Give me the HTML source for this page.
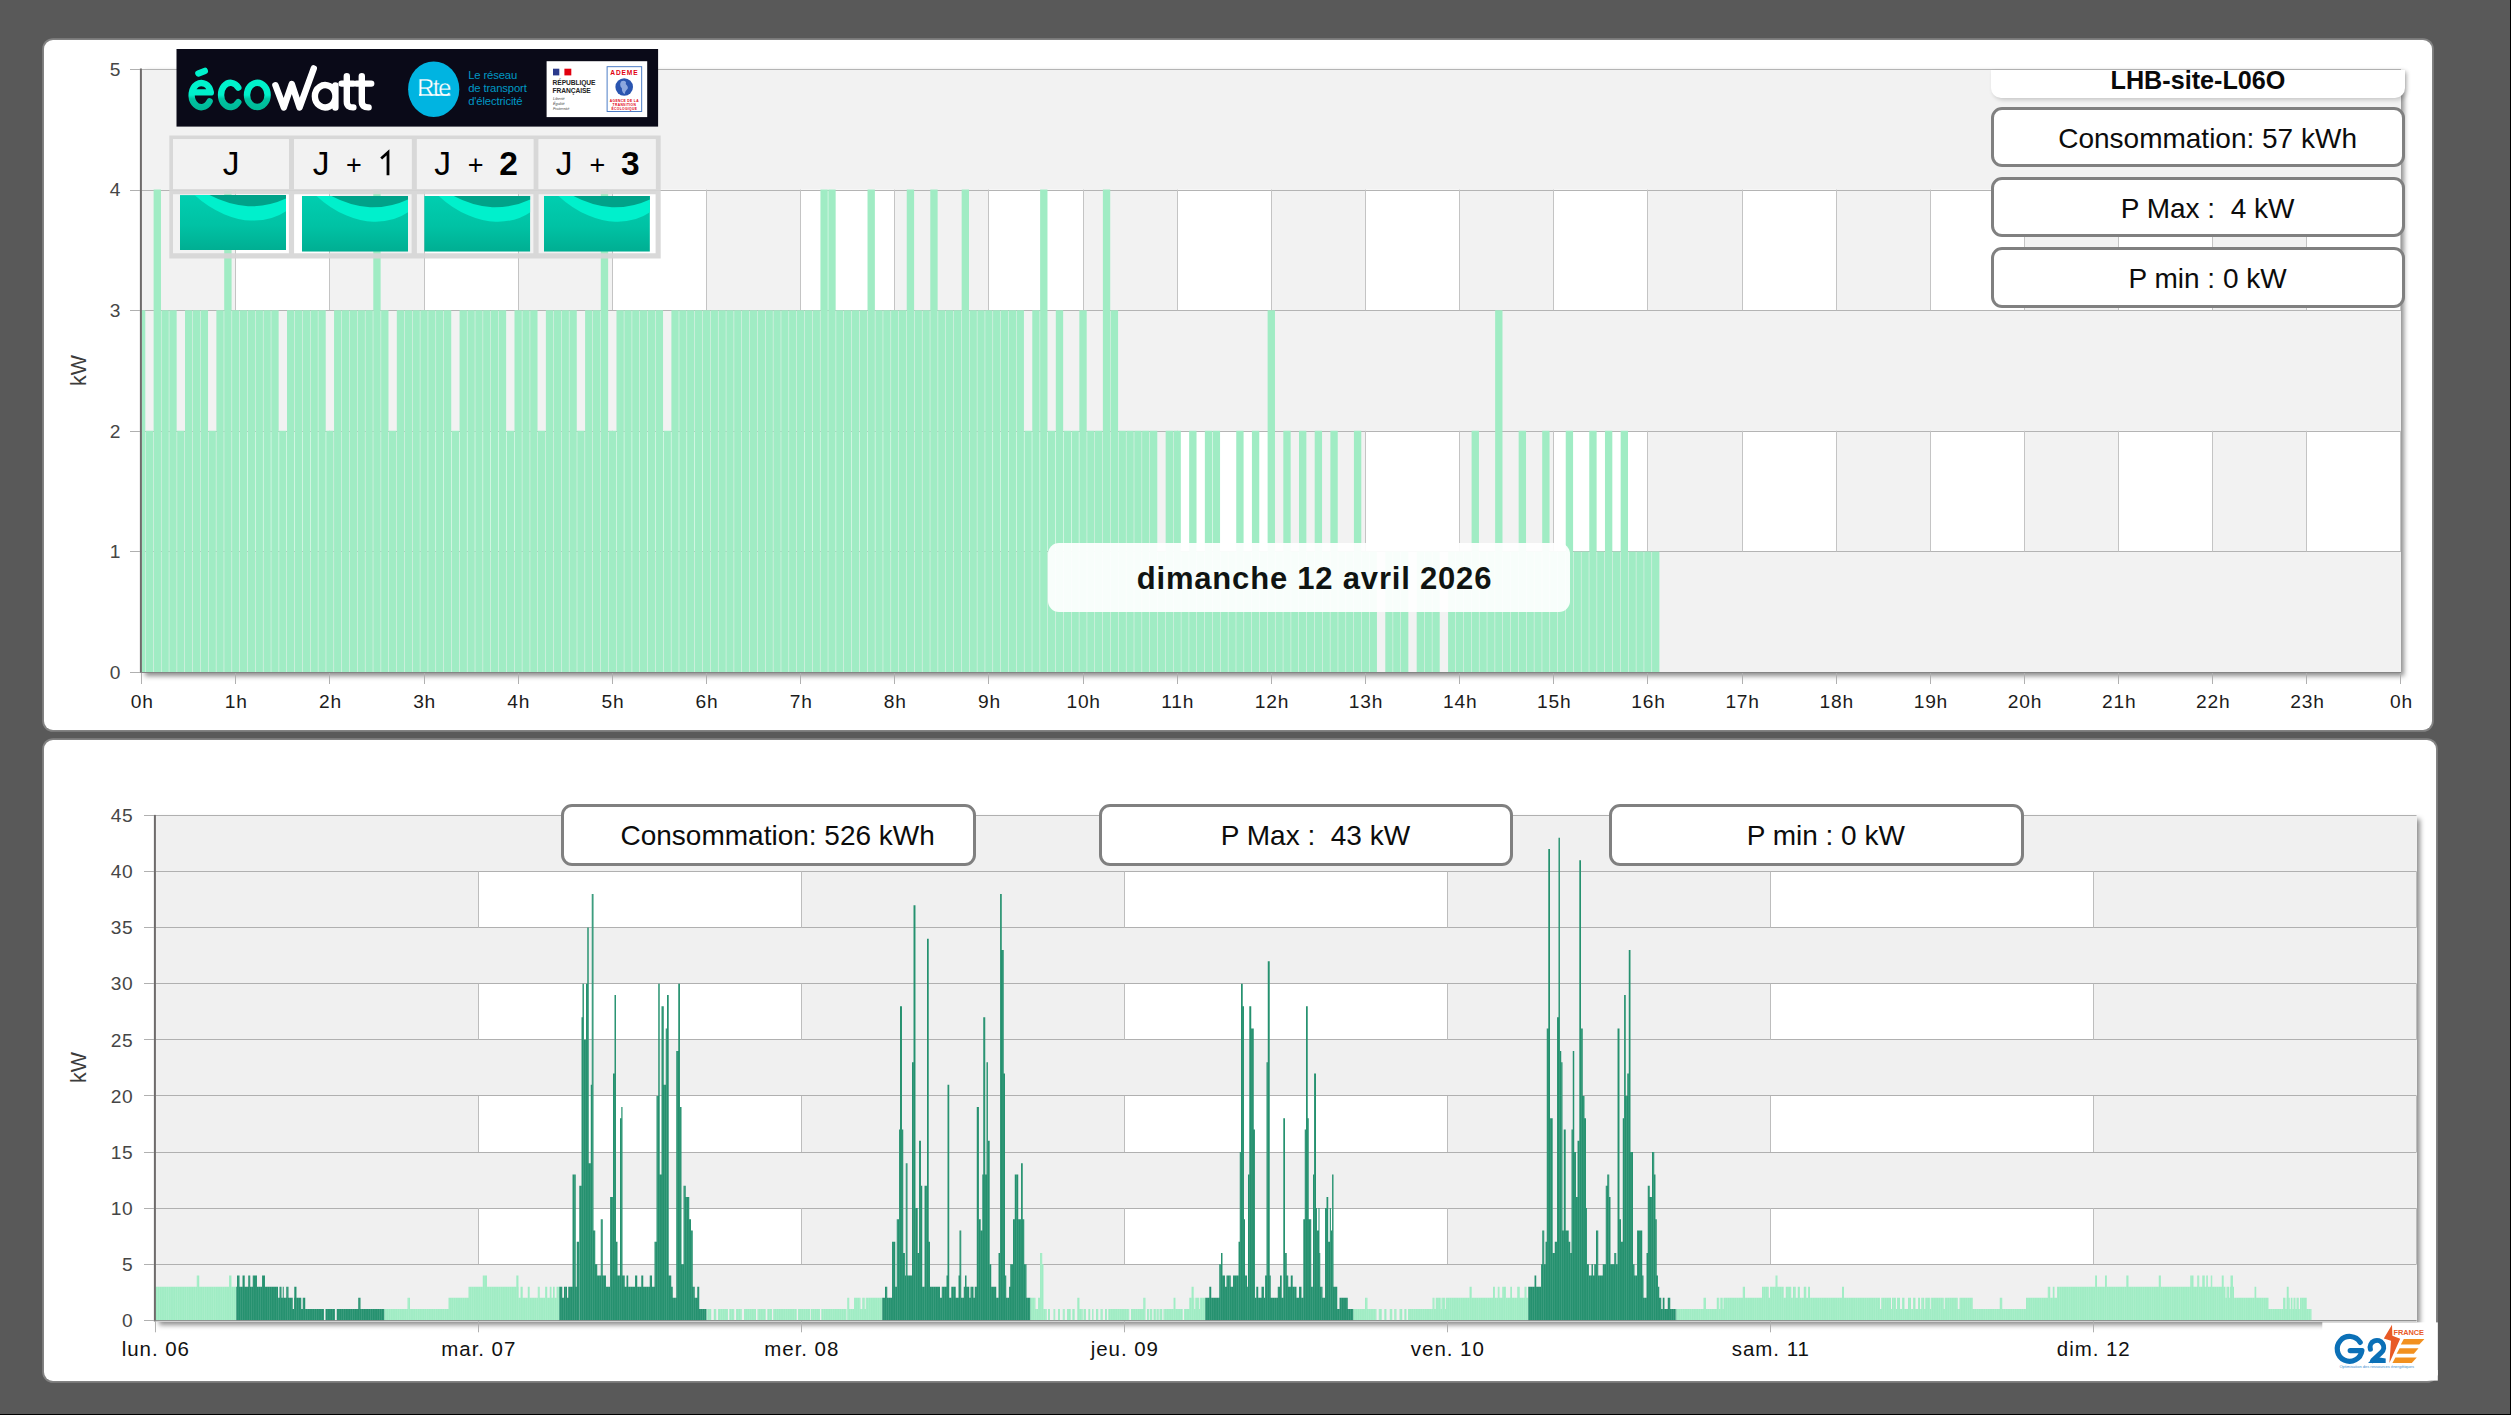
<!DOCTYPE html>
<html><head><meta charset="utf-8"><title>LHB-site-L06O</title>
<style>
html,body{margin:0;padding:0;}
body{width:2511px;height:1415px;overflow:hidden;background:#000;position:relative;font-family:'Liberation Sans', sans-serif;}
#bg{position:absolute;left:0;top:0;width:2510px;height:1414px;background:#595959;}
.panel{position:absolute;background:#fff;border-radius:9px;box-shadow:0 0 0 1.8px rgba(255,255,255,.25);}
.plot{position:absolute;box-shadow:3px 3px 5px rgba(0,0,0,.45);background:#f2f2f2;}
#ov{position:absolute;left:0;top:0;}
.sb{position:absolute;box-sizing:border-box;border:3px solid #808080;border-radius:11px;background:#fff;
 text-align:center;color:#0c0c0c;white-space:pre;padding-left:19px;}
#title{position:absolute;left:1991px;top:69.5px;width:414px;height:28.5px;background:#fff;border-radius:0 0 10px 10px;
 text-align:center;font-weight:bold;font-size:25.2px;line-height:20px;color:#0a0a0a;box-shadow:2px 2px 4px rgba(0,0,0,.18);}
#date{position:absolute;left:1048px;top:542.5px;width:522px;height:69.5px;border-radius:11px;background:rgba(255,255,255,.93);
 text-align:center;font-weight:bold;font-size:31px;letter-spacing:.8px;line-height:71px;padding-left:11px;box-sizing:border-box;color:#101412;}
</style></head><body>
<div id="bg"></div>
<div class="panel" style="left:44px;top:40px;width:2388px;height:690px"></div>
<div class="panel" style="left:44px;top:740.3px;width:2392px;height:640.4px"></div>
<div class="plot" style="left:142px;top:69px;width:2259px;height:604px"></div>
<div class="plot" style="left:156px;top:815.5px;width:2261px;height:506px"></div>
<svg id="ov" width="2511" height="1415" viewBox="0 0 2511 1415">
<rect x="141.6" y="69" width="2259.4" height="603" fill="#f2f2f2"/>
<rect x="235.74" y="430.8" width="94.14" height="120.6" fill="#fff"/>
<rect x="424.02" y="430.8" width="94.14" height="120.6" fill="#fff"/>
<rect x="612.31" y="430.8" width="94.14" height="120.6" fill="#fff"/>
<rect x="800.59" y="430.8" width="94.14" height="120.6" fill="#fff"/>
<rect x="988.88" y="430.8" width="94.14" height="120.6" fill="#fff"/>
<rect x="1177.16" y="430.8" width="94.14" height="120.6" fill="#fff"/>
<rect x="1365.44" y="430.8" width="94.14" height="120.6" fill="#fff"/>
<rect x="1553.72" y="430.8" width="94.14" height="120.6" fill="#fff"/>
<rect x="1742.01" y="430.8" width="94.14" height="120.6" fill="#fff"/>
<rect x="1930.29" y="430.8" width="94.14" height="120.6" fill="#fff"/>
<rect x="2118.57" y="430.8" width="94.14" height="120.6" fill="#fff"/>
<rect x="2306.86" y="430.8" width="94.14" height="120.6" fill="#fff"/>
<rect x="235.74" y="189.6" width="94.14" height="120.6" fill="#fff"/>
<rect x="424.02" y="189.6" width="94.14" height="120.6" fill="#fff"/>
<rect x="612.31" y="189.6" width="94.14" height="120.6" fill="#fff"/>
<rect x="800.59" y="189.6" width="94.14" height="120.6" fill="#fff"/>
<rect x="988.88" y="189.6" width="94.14" height="120.6" fill="#fff"/>
<rect x="1177.16" y="189.6" width="94.14" height="120.6" fill="#fff"/>
<rect x="1365.44" y="189.6" width="94.14" height="120.6" fill="#fff"/>
<rect x="1553.72" y="189.6" width="94.14" height="120.6" fill="#fff"/>
<rect x="1742.01" y="189.6" width="94.14" height="120.6" fill="#fff"/>
<rect x="1930.29" y="189.6" width="94.14" height="120.6" fill="#fff"/>
<rect x="2118.57" y="189.6" width="94.14" height="120.6" fill="#fff"/>
<rect x="2306.86" y="189.6" width="94.14" height="120.6" fill="#fff"/>
<path d="M141.6 672.5H2401M141.6 551.5H2401M141.6 431.5H2401M141.6 310.5H2401M141.6 190.5H2401M141.6 69.5H2401" stroke="#b4b4b4" stroke-width="1" fill="none"/>
<path d="M235.5 430.8V551.4M329.5 430.8V551.4M424.5 430.8V551.4M518.5 430.8V551.4M612.5 430.8V551.4M706.5 430.8V551.4M800.5 430.8V551.4M894.5 430.8V551.4M988.5 430.8V551.4M1083.5 430.8V551.4M1177.5 430.8V551.4M1271.5 430.8V551.4M1365.5 430.8V551.4M1459.5 430.8V551.4M1553.5 430.8V551.4M1647.5 430.8V551.4M1742.5 430.8V551.4M1836.5 430.8V551.4M1930.5 430.8V551.4M2024.5 430.8V551.4M2118.5 430.8V551.4M2212.5 430.8V551.4M2306.5 430.8V551.4M2400.5 430.8V551.4M235.5 189.6V310.2M329.5 189.6V310.2M424.5 189.6V310.2M518.5 189.6V310.2M612.5 189.6V310.2M706.5 189.6V310.2M800.5 189.6V310.2M894.5 189.6V310.2M988.5 189.6V310.2M1083.5 189.6V310.2M1177.5 189.6V310.2M1271.5 189.6V310.2M1365.5 189.6V310.2M1459.5 189.6V310.2M1553.5 189.6V310.2M1647.5 189.6V310.2M1742.5 189.6V310.2M1836.5 189.6V310.2M1930.5 189.6V310.2M2024.5 189.6V310.2M2118.5 189.6V310.2M2212.5 189.6V310.2M2306.5 189.6V310.2M2400.5 189.6V310.2" stroke="#c4c4c4" stroke-width="1" fill="none"/>
<path d="M142 672V310.2H145.28V672ZM145.77 672V430.8H153.12V672ZM153.62 672V189.6H160.97V672ZM161.46 672V310.2H168.81V672ZM169.31 672V310.2H176.66V672ZM177.15 672V430.8H184.5V672ZM185 672V310.2H192.35V672ZM192.84 672V310.2H200.19V672ZM200.69 672V310.2H208.04V672ZM208.53 672V430.8H215.88V672ZM216.38 672V310.2H223.73V672ZM224.22 672V189.6H231.57V672ZM232.07 672V310.2H239.42V672ZM239.91 672V310.2H247.26V672ZM247.76 672V310.2H255.11V672ZM255.6 672V310.2H262.95V672ZM263.45 672V310.2H270.8V672ZM271.29 672V310.2H278.64V672ZM279.14 672V430.8H286.49V672ZM286.98 672V310.2H294.33V672ZM294.83 672V310.2H302.18V672ZM302.67 672V310.2H310.02V672ZM310.52 672V310.2H317.87V672ZM318.36 672V310.2H325.71V672ZM326.21 672V430.8H333.56V672ZM334.05 672V310.2H341.4V672ZM341.9 672V310.2H349.25V672ZM349.74 672V310.2H357.09V672ZM357.59 672V310.2H364.94V672ZM365.43 672V310.2H372.78V672ZM373.28 672V189.6H380.63V672ZM381.12 672V310.2H388.47V672ZM388.97 672V430.8H396.32V672ZM396.81 672V310.2H404.16V672ZM404.66 672V310.2H412.01V672ZM412.5 672V310.2H419.85V672ZM420.35 672V310.2H427.7V672ZM428.2 672V310.2H435.55V672ZM436.04 672V310.2H443.39V672ZM443.89 672V310.2H451.24V672ZM451.73 672V430.8H459.08V672ZM459.58 672V310.2H466.93V672ZM467.42 672V310.2H474.77V672ZM475.27 672V310.2H482.62V672ZM483.11 672V310.2H490.46V672ZM490.96 672V310.2H498.31V672ZM498.8 672V310.2H506.15V672ZM506.65 672V430.8H514V672ZM514.49 672V310.2H521.84V672ZM522.34 672V310.2H529.69V672ZM530.18 672V310.2H537.53V672ZM538.03 672V430.8H545.38V672ZM545.87 672V310.2H553.22V672ZM553.72 672V310.2H561.07V672ZM561.56 672V310.2H568.91V672ZM569.41 672V310.2H576.76V672ZM577.25 672V430.8H584.6V672ZM585.1 672V310.2H592.45V672ZM592.94 672V310.2H600.29V672ZM600.79 672V189.6H608.14V672ZM608.63 672V430.8H615.98V672ZM616.48 672V310.2H623.83V672ZM624.32 672V310.2H631.67V672ZM632.17 672V310.2H639.52V672ZM640.01 672V310.2H647.36V672ZM647.86 672V310.2H655.21V672ZM655.7 672V310.2H663.05V672ZM663.55 672V430.8H670.9V672ZM671.39 672V310.2H678.74V672ZM679.24 672V310.2H686.59V672ZM687.08 672V310.2H694.43V672ZM694.93 672V310.2H702.28V672ZM702.78 672V310.2H710.12V672ZM710.62 672V310.2H717.97V672ZM718.47 672V310.2H725.82V672ZM726.31 672V310.2H733.66V672ZM734.16 672V310.2H741.51V672ZM742 672V310.2H749.35V672ZM749.85 672V310.2H757.2V672ZM757.69 672V310.2H765.04V672ZM765.54 672V310.2H772.89V672ZM773.38 672V310.2H780.73V672ZM781.23 672V310.2H788.58V672ZM789.07 672V310.2H796.42V672ZM796.92 672V310.2H804.27V672ZM804.76 672V310.2H812.11V672ZM812.61 672V310.2H819.96V672ZM820.45 672V189.6H827.8V672ZM828.3 672V189.6H835.65V672ZM836.14 672V310.2H843.49V672ZM843.99 672V310.2H851.34V672ZM851.83 672V310.2H859.18V672ZM859.68 672V310.2H867.03V672ZM867.52 672V189.6H874.87V672ZM875.37 672V310.2H882.72V672ZM883.21 672V310.2H890.56V672ZM891.06 672V310.2H898.41V672ZM898.9 672V310.2H906.25V672ZM906.75 672V189.6H914.1V672ZM914.59 672V310.2H921.94V672ZM922.44 672V310.2H929.79V672ZM930.28 672V189.6H937.63V672ZM938.13 672V310.2H945.48V672ZM945.97 672V310.2H953.32V672ZM953.82 672V310.2H961.17V672ZM961.66 672V189.6H969.01V672ZM969.51 672V310.2H976.86V672ZM977.35 672V310.2H984.7V672ZM985.2 672V310.2H992.55V672ZM993.05 672V310.2H1000.4V672ZM1000.89 672V310.2H1008.24V672ZM1008.74 672V310.2H1016.09V672ZM1016.58 672V310.2H1023.93V672ZM1024.43 672V430.8H1031.78V672ZM1032.27 672V310.2H1039.62V672ZM1040.12 672V189.6H1047.47V672ZM1047.96 672V430.8H1055.31V672ZM1055.81 672V310.2H1063.16V672ZM1063.65 672V430.8H1071V672ZM1071.5 672V430.8H1078.85V672ZM1079.34 672V310.2H1086.69V672ZM1087.19 672V430.8H1094.54V672ZM1095.03 672V430.8H1102.38V672ZM1102.88 672V189.6H1110.23V672ZM1110.72 672V310.2H1118.07V672ZM1118.57 672V430.8H1125.92V672ZM1126.41 672V430.8H1133.76V672ZM1134.26 672V430.8H1141.61V672ZM1142.1 672V430.8H1149.45V672ZM1149.95 672V430.8H1157.3V672ZM1157.79 672V551.4H1165.14V672ZM1165.64 672V430.8H1172.99V672ZM1173.48 672V430.8H1180.83V672ZM1181.33 672V551.4H1188.68V672ZM1189.17 672V430.8H1196.52V672ZM1197.02 672V551.4H1204.37V672ZM1204.86 672V430.8H1212.21V672ZM1212.71 672V430.8H1220.06V672ZM1220.55 672V551.4H1227.9V672ZM1228.4 672V551.4H1235.75V672ZM1236.24 672V430.8H1243.59V672ZM1244.09 672V551.4H1251.44V672ZM1251.93 672V430.8H1259.28V672ZM1259.78 672V551.4H1267.13V672ZM1267.62 672V310.2H1274.97V672ZM1275.47 672V551.4H1282.82V672ZM1283.32 672V430.8H1290.67V672ZM1291.16 672V551.4H1298.51V672ZM1299.01 672V430.8H1306.36V672ZM1306.85 672V551.4H1314.2V672ZM1314.7 672V430.8H1322.05V672ZM1322.54 672V551.4H1329.89V672ZM1330.39 672V430.8H1337.74V672ZM1338.23 672V551.4H1345.58V672ZM1346.08 672V551.4H1353.43V672ZM1353.92 672V430.8H1361.27V672ZM1361.77 672V551.4H1369.12V672ZM1369.61 672V551.4H1376.96V672ZM1385.3 672V551.4H1392.65V672ZM1393.15 672V551.4H1400.5V672ZM1400.99 672V551.4H1408.34V672ZM1416.68 672V551.4H1424.03V672ZM1424.53 672V551.4H1431.88V672ZM1432.37 672V551.4H1439.72V672ZM1448.06 672V551.4H1455.41V672ZM1455.91 672V551.4H1463.26V672ZM1463.75 672V551.4H1471.1V672ZM1471.6 672V430.8H1478.95V672ZM1479.44 672V551.4H1486.79V672ZM1487.29 672V551.4H1494.64V672ZM1495.13 672V310.2H1502.48V672ZM1502.98 672V551.4H1510.33V672ZM1510.82 672V551.4H1518.17V672ZM1518.67 672V430.8H1526.02V672ZM1526.51 672V551.4H1533.86V672ZM1534.36 672V551.4H1541.71V672ZM1542.2 672V430.8H1549.55V672ZM1550.05 672V551.4H1557.4V672ZM1557.9 672V551.4H1565.25V672ZM1565.74 672V430.8H1573.09V672ZM1573.59 672V551.4H1580.94V672ZM1581.43 672V551.4H1588.78V672ZM1589.28 672V430.8H1596.63V672ZM1597.12 672V551.4H1604.47V672ZM1604.97 672V430.8H1612.32V672ZM1612.81 672V551.4H1620.16V672ZM1620.66 672V430.8H1628.01V672ZM1628.5 672V551.4H1635.85V672ZM1636.35 672V551.4H1643.7V672ZM1644.19 672V551.4H1651.54V672ZM1652.04 672V551.4H1659.39V672Z" fill="#a0ecc4"/>
<rect x="139.9" y="68.5" width="2" height="604.5" fill="#6e6b6b"/>
<rect x="139.9" y="672" width="2261.1" height="1" fill="#858585"/>
<path d="M130 672.5H140M130 551.5H140M130 431.5H140M130 310.5H140M130 190.5H140M130 69.5H140M141.5 673V684M235.5 673V684M329.5 673V684M424.5 673V684M518.5 673V684M612.5 673V684M706.5 673V684M800.5 673V684M894.5 673V684M988.5 673V684M1083.5 673V684M1177.5 673V684M1271.5 673V684M1365.5 673V684M1459.5 673V684M1553.5 673V684M1647.5 673V684M1742.5 673V684M1836.5 673V684M1930.5 673V684M2024.5 673V684M2118.5 673V684M2212.5 673V684M2306.5 673V684M2400.5 673V684" stroke="#b0b0b0" stroke-width="1" fill="none"/>
<text x="121.2" y="678.8" text-anchor="end" style="font-family:'Liberation Sans', sans-serif;font-size:19.2px;letter-spacing:0.8px" fill="#464646">0</text>
<text x="121.2" y="558.2" text-anchor="end" style="font-family:'Liberation Sans', sans-serif;font-size:19.2px;letter-spacing:0.8px" fill="#464646">1</text>
<text x="121.2" y="437.6" text-anchor="end" style="font-family:'Liberation Sans', sans-serif;font-size:19.2px;letter-spacing:0.8px" fill="#464646">2</text>
<text x="121.2" y="317" text-anchor="end" style="font-family:'Liberation Sans', sans-serif;font-size:19.2px;letter-spacing:0.8px" fill="#464646">3</text>
<text x="121.2" y="196.4" text-anchor="end" style="font-family:'Liberation Sans', sans-serif;font-size:19.2px;letter-spacing:0.8px" fill="#464646">4</text>
<text x="121.2" y="75.8" text-anchor="end" style="font-family:'Liberation Sans', sans-serif;font-size:19.2px;letter-spacing:0.8px" fill="#464646">5</text>
<text x="142.2" y="707.6" text-anchor="middle" style="font-family:'Liberation Sans', sans-serif;font-size:19.2px;letter-spacing:0.8px" fill="#1c1c1c">0h</text>
<text x="236.34" y="707.6" text-anchor="middle" style="font-family:'Liberation Sans', sans-serif;font-size:19.2px;letter-spacing:0.8px" fill="#1c1c1c">1h</text>
<text x="330.48" y="707.6" text-anchor="middle" style="font-family:'Liberation Sans', sans-serif;font-size:19.2px;letter-spacing:0.8px" fill="#1c1c1c">2h</text>
<text x="424.62" y="707.6" text-anchor="middle" style="font-family:'Liberation Sans', sans-serif;font-size:19.2px;letter-spacing:0.8px" fill="#1c1c1c">3h</text>
<text x="518.77" y="707.6" text-anchor="middle" style="font-family:'Liberation Sans', sans-serif;font-size:19.2px;letter-spacing:0.8px" fill="#1c1c1c">4h</text>
<text x="612.91" y="707.6" text-anchor="middle" style="font-family:'Liberation Sans', sans-serif;font-size:19.2px;letter-spacing:0.8px" fill="#1c1c1c">5h</text>
<text x="707.05" y="707.6" text-anchor="middle" style="font-family:'Liberation Sans', sans-serif;font-size:19.2px;letter-spacing:0.8px" fill="#1c1c1c">6h</text>
<text x="801.19" y="707.6" text-anchor="middle" style="font-family:'Liberation Sans', sans-serif;font-size:19.2px;letter-spacing:0.8px" fill="#1c1c1c">7h</text>
<text x="895.33" y="707.6" text-anchor="middle" style="font-family:'Liberation Sans', sans-serif;font-size:19.2px;letter-spacing:0.8px" fill="#1c1c1c">8h</text>
<text x="989.48" y="707.6" text-anchor="middle" style="font-family:'Liberation Sans', sans-serif;font-size:19.2px;letter-spacing:0.8px" fill="#1c1c1c">9h</text>
<text x="1083.62" y="707.6" text-anchor="middle" style="font-family:'Liberation Sans', sans-serif;font-size:19.2px;letter-spacing:0.8px" fill="#1c1c1c">10h</text>
<text x="1177.76" y="707.6" text-anchor="middle" style="font-family:'Liberation Sans', sans-serif;font-size:19.2px;letter-spacing:0.8px" fill="#1c1c1c">11h</text>
<text x="1271.9" y="707.6" text-anchor="middle" style="font-family:'Liberation Sans', sans-serif;font-size:19.2px;letter-spacing:0.8px" fill="#1c1c1c">12h</text>
<text x="1366.04" y="707.6" text-anchor="middle" style="font-family:'Liberation Sans', sans-serif;font-size:19.2px;letter-spacing:0.8px" fill="#1c1c1c">13h</text>
<text x="1460.18" y="707.6" text-anchor="middle" style="font-family:'Liberation Sans', sans-serif;font-size:19.2px;letter-spacing:0.8px" fill="#1c1c1c">14h</text>
<text x="1554.32" y="707.6" text-anchor="middle" style="font-family:'Liberation Sans', sans-serif;font-size:19.2px;letter-spacing:0.8px" fill="#1c1c1c">15h</text>
<text x="1648.47" y="707.6" text-anchor="middle" style="font-family:'Liberation Sans', sans-serif;font-size:19.2px;letter-spacing:0.8px" fill="#1c1c1c">16h</text>
<text x="1742.61" y="707.6" text-anchor="middle" style="font-family:'Liberation Sans', sans-serif;font-size:19.2px;letter-spacing:0.8px" fill="#1c1c1c">17h</text>
<text x="1836.75" y="707.6" text-anchor="middle" style="font-family:'Liberation Sans', sans-serif;font-size:19.2px;letter-spacing:0.8px" fill="#1c1c1c">18h</text>
<text x="1930.89" y="707.6" text-anchor="middle" style="font-family:'Liberation Sans', sans-serif;font-size:19.2px;letter-spacing:0.8px" fill="#1c1c1c">19h</text>
<text x="2025.03" y="707.6" text-anchor="middle" style="font-family:'Liberation Sans', sans-serif;font-size:19.2px;letter-spacing:0.8px" fill="#1c1c1c">20h</text>
<text x="2119.17" y="707.6" text-anchor="middle" style="font-family:'Liberation Sans', sans-serif;font-size:19.2px;letter-spacing:0.8px" fill="#1c1c1c">21h</text>
<text x="2213.32" y="707.6" text-anchor="middle" style="font-family:'Liberation Sans', sans-serif;font-size:19.2px;letter-spacing:0.8px" fill="#1c1c1c">22h</text>
<text x="2307.46" y="707.6" text-anchor="middle" style="font-family:'Liberation Sans', sans-serif;font-size:19.2px;letter-spacing:0.8px" fill="#1c1c1c">23h</text>
<text x="2401.6" y="707.6" text-anchor="middle" style="font-family:'Liberation Sans', sans-serif;font-size:19.2px;letter-spacing:0.8px" fill="#1c1c1c">0h</text>
<text transform="translate(86.2 370.6) rotate(-90)" text-anchor="middle" style="font-family:'Liberation Sans', sans-serif;font-size:21.5px" fill="#3c3c3c">kW</text>
<rect x="155.5" y="815.4" width="2261" height="504.9" fill="#f0f0f0"/>
<rect x="478.5" y="1208.1" width="323" height="56.1" fill="#fff"/>
<rect x="1124.5" y="1208.1" width="323" height="56.1" fill="#fff"/>
<rect x="1770.5" y="1208.1" width="323" height="56.1" fill="#fff"/>
<rect x="478.5" y="1095.9" width="323" height="56.1" fill="#fff"/>
<rect x="1124.5" y="1095.9" width="323" height="56.1" fill="#fff"/>
<rect x="1770.5" y="1095.9" width="323" height="56.1" fill="#fff"/>
<rect x="478.5" y="983.7" width="323" height="56.1" fill="#fff"/>
<rect x="1124.5" y="983.7" width="323" height="56.1" fill="#fff"/>
<rect x="1770.5" y="983.7" width="323" height="56.1" fill="#fff"/>
<rect x="478.5" y="871.5" width="323" height="56.1" fill="#fff"/>
<rect x="1124.5" y="871.5" width="323" height="56.1" fill="#fff"/>
<rect x="1770.5" y="871.5" width="323" height="56.1" fill="#fff"/>
<path d="M155.5 1320.5H2416.5M155.5 1264.5H2416.5M155.5 1208.5H2416.5M155.5 1152.5H2416.5M155.5 1095.5H2416.5M155.5 1039.5H2416.5M155.5 983.5H2416.5M155.5 927.5H2416.5M155.5 871.5H2416.5M155.5 815.5H2416.5" stroke="#b0b0b0" stroke-width="1" fill="none"/>
<path d="M478.5 1208.1V1264.2M801.5 1208.1V1264.2M1124.5 1208.1V1264.2M1447.5 1208.1V1264.2M1770.5 1208.1V1264.2M2093.5 1208.1V1264.2M2416.5 1208.1V1264.2M478.5 1095.9V1152M801.5 1095.9V1152M1124.5 1095.9V1152M1447.5 1095.9V1152M1770.5 1095.9V1152M2093.5 1095.9V1152M2416.5 1095.9V1152M478.5 983.7V1039.8M801.5 983.7V1039.8M1124.5 983.7V1039.8M1447.5 983.7V1039.8M1770.5 983.7V1039.8M2093.5 983.7V1039.8M2416.5 983.7V1039.8M478.5 871.5V927.6M801.5 871.5V927.6M1124.5 871.5V927.6M1447.5 871.5V927.6M1770.5 871.5V927.6M2093.5 871.5V927.6M2416.5 871.5V927.6" stroke="#bdbdbd" stroke-width="1" fill="none"/>
<path d="M155.5 1320.3V1286.64H196.75V1320.3ZM196.75 1320.3V1275.42H199.25V1320.3ZM199.25 1320.3V1286.64H229V1320.3ZM229 1320.3V1275.42H231.5V1320.3ZM231.5 1320.3V1286.64H236.25V1320.3ZM384.25 1320.3V1309.08H407.5V1320.3ZM407.5 1320.3V1297.86H410V1320.3ZM410 1320.3V1309.08H448.5V1320.3ZM448.5 1320.3V1297.86H468.5V1320.3ZM468.5 1320.3V1286.64H482.75V1320.3ZM482.75 1320.3V1275.42H487V1320.3ZM487 1320.3V1286.64H516.25V1320.3ZM516.25 1320.3V1275.42H518.5V1320.3ZM518.5 1320.3V1286.64H518.75V1320.3ZM518.75 1320.3V1297.86H520.5V1320.3ZM520.5 1320.3V1286.64H522.75V1320.3ZM522.75 1320.3V1297.86H527.75V1320.3ZM527.75 1320.3V1286.64H529.75V1320.3ZM529.75 1320.3V1297.86H537.75V1320.3ZM537.75 1320.3V1286.64H539.75V1320.3ZM539.75 1320.3V1297.86H545V1320.3ZM545 1320.3V1286.64H547.25V1320.3ZM547.25 1320.3V1297.86H549.75V1320.3ZM549.75 1320.3V1286.64H551.5V1320.3ZM551.5 1320.3V1297.86H553V1320.3ZM553 1320.3V1286.64H554.75V1320.3ZM554.75 1320.3V1297.86H556.5V1320.3ZM556.5 1320.3V1286.64H559.25V1320.3ZM707.25 1320.3V1309.08H711.25V1320.3ZM713.75 1320.3V1309.08H716.25V1320.3ZM718 1320.3V1309.08H728V1320.3ZM729.25 1320.3V1309.08H734.25V1320.3ZM736 1320.3V1309.08H741.75V1320.3ZM744 1320.3V1309.08H756V1320.3ZM757.5 1320.3V1309.08H765.75V1320.3ZM767.25 1320.3V1309.08H772V1320.3ZM773.25 1320.3V1309.08H796.75V1320.3ZM798 1320.3V1309.08H810.25V1320.3ZM811 1320.3V1309.08H820V1320.3ZM821.25 1320.3V1309.08H846.5V1320.3ZM847.25 1320.3V1297.86H849.25V1320.3ZM849.25 1320.3V1309.08H854V1320.3ZM854 1320.3V1297.86H860.5V1320.3ZM860.5 1320.3V1309.08H862.25V1320.3ZM862.25 1320.3V1297.86H864.75V1320.3ZM864.75 1320.3V1309.08H865.75V1320.3ZM865.75 1320.3V1297.86H882.25V1320.3ZM1030.25 1320.3V1297.86H1035.5V1320.3ZM1035.5 1320.3V1309.08H1038V1320.3ZM1038 1320.3V1297.86H1040V1320.3ZM1040 1320.3V1252.98H1042.25V1320.3ZM1042.25 1320.3V1264.2H1043.5V1320.3ZM1043.5 1320.3V1309.08H1046.75V1320.3ZM1048 1320.3V1309.08H1050V1320.3ZM1053.5 1320.3V1309.08H1055.25V1320.3ZM1058 1320.3V1309.08H1060V1320.3ZM1062.75 1320.3V1309.08H1064.75V1320.3ZM1067 1320.3V1309.08H1070.75V1320.3ZM1072.25 1320.3V1309.08H1074.75V1320.3ZM1077.25 1320.3V1297.86H1079.5V1320.3ZM1079.5 1320.3V1309.08H1082.75V1320.3ZM1083.5 1320.3V1309.08H1086V1320.3ZM1088.25 1320.3V1309.08H1090.25V1320.3ZM1092 1320.3V1309.08H1093.5V1320.3ZM1096 1320.3V1309.08H1098.25V1320.3ZM1100.5 1320.3V1309.08H1102.75V1320.3ZM1105 1320.3V1309.08H1107V1320.3ZM1108.25 1320.3V1309.08H1129.25V1320.3ZM1131 1320.3V1309.08H1143.25V1320.3ZM1143.25 1320.3V1297.86H1145.5V1320.3ZM1147 1320.3V1309.08H1149.25V1320.3ZM1150 1320.3V1309.08H1152.25V1320.3ZM1153.5 1320.3V1309.08H1156V1320.3ZM1156.5 1320.3V1309.08H1158.75V1320.3ZM1159.5 1320.3V1309.08H1162.25V1320.3ZM1163.5 1320.3V1309.08H1173.5V1320.3ZM1173.5 1320.3V1297.86H1175.5V1320.3ZM1175.5 1320.3V1309.08H1182.75V1320.3ZM1184 1320.3V1309.08H1189.25V1320.3ZM1189.25 1320.3V1297.86H1191.5V1320.3ZM1191.5 1320.3V1286.64H1193.75V1320.3ZM1193.75 1320.3V1297.86H1194.25V1320.3ZM1194.25 1320.3V1309.08H1195.25V1320.3ZM1195.25 1320.3V1297.86H1199V1320.3ZM1199 1320.3V1309.08H1199.75V1320.3ZM1199.75 1320.3V1297.86H1205.25V1320.3ZM1353.25 1320.3V1309.08H1365V1320.3ZM1365 1320.3V1297.86H1367.5V1320.3ZM1367.5 1320.3V1309.08H1376.5V1320.3ZM1378.75 1320.3V1309.08H1381.75V1320.3ZM1384.25 1320.3V1309.08H1386.5V1320.3ZM1389.75 1320.3V1309.08H1392.25V1320.3ZM1394.25 1320.3V1309.08H1396.5V1320.3ZM1399.5 1320.3V1309.08H1402.25V1320.3ZM1404.25 1320.3V1309.08H1406.5V1320.3ZM1408 1320.3V1309.08H1432.5V1320.3ZM1432.5 1320.3V1297.86H1434.5V1320.3ZM1434.5 1320.3V1309.08H1435.75V1320.3ZM1435.75 1320.3V1297.86H1440.75V1320.3ZM1440.75 1320.3V1309.08H1441.5V1320.3ZM1441.5 1320.3V1297.86H1445V1320.3ZM1445 1320.3V1309.08H1445.75V1320.3ZM1445.75 1320.3V1297.86H1469.5V1320.3ZM1469.5 1320.3V1286.64H1471.75V1320.3ZM1471.75 1320.3V1297.86H1493V1320.3ZM1493 1320.3V1286.64H1495V1320.3ZM1495 1320.3V1297.86H1497.75V1320.3ZM1497.75 1320.3V1286.64H1499.5V1320.3ZM1499.5 1320.3V1297.86H1502.25V1320.3ZM1502.25 1320.3V1286.64H1506V1320.3ZM1506 1320.3V1297.86H1510.25V1320.3ZM1510.25 1320.3V1286.64H1512V1320.3ZM1512 1320.3V1297.86H1517.25V1320.3ZM1517.25 1320.3V1286.64H1519.75V1320.3ZM1519.75 1320.3V1297.86H1524.5V1320.3ZM1524.5 1320.3V1286.64H1526.5V1320.3ZM1526.5 1320.3V1297.86H1528.25V1320.3ZM1676.25 1320.3V1309.08H1703.5V1320.3ZM1703.5 1320.3V1297.86H1706V1320.3ZM1706 1320.3V1309.08H1716.75V1320.3ZM1716.75 1320.3V1297.86H1719.25V1320.3ZM1719.25 1320.3V1309.08H1720.25V1320.3ZM1720.25 1320.3V1297.86H1722.75V1320.3ZM1722.75 1320.3V1309.08H1723.5V1320.3ZM1723.5 1320.3V1297.86H1742.75V1320.3ZM1742.75 1320.3V1286.64H1745V1320.3ZM1745 1320.3V1297.86H1762V1320.3ZM1762 1320.3V1286.64H1768.75V1320.3ZM1768.75 1320.3V1297.86H1770V1320.3ZM1770 1320.3V1286.64H1775.5V1320.3ZM1775.5 1320.3V1275.42H1777.5V1320.3ZM1777.5 1320.3V1286.64H1783.75V1320.3ZM1783.75 1320.3V1297.86H1785.75V1320.3ZM1785.75 1320.3V1286.64H1791.25V1320.3ZM1791.25 1320.3V1297.86H1793V1320.3ZM1793 1320.3V1286.64H1795.75V1320.3ZM1795.75 1320.3V1297.86H1797.75V1320.3ZM1797.75 1320.3V1286.64H1800V1320.3ZM1800 1320.3V1297.86H1803.75V1320.3ZM1803.75 1320.3V1286.64H1806.25V1320.3ZM1806.25 1320.3V1297.86H1808V1320.3ZM1808 1320.3V1286.64H1810V1320.3ZM1810 1320.3V1297.86H1842V1320.3ZM1842 1320.3V1286.64H1844V1320.3ZM1844 1320.3V1297.86H1880V1320.3ZM1880 1320.3V1309.08H1881.25V1320.3ZM1881.25 1320.3V1297.86H1891V1320.3ZM1891 1320.3V1309.08H1892V1320.3ZM1892 1320.3V1297.86H1896V1320.3ZM1896 1320.3V1309.08H1897V1320.3ZM1897 1320.3V1297.86H1900V1320.3ZM1900 1320.3V1309.08H1902V1320.3ZM1902 1320.3V1297.86H1904.5V1320.3ZM1904.5 1320.3V1309.08H1908V1320.3ZM1908 1320.3V1297.86H1911V1320.3ZM1911 1320.3V1309.08H1913V1320.3ZM1913 1320.3V1297.86H1915.5V1320.3ZM1915.5 1320.3V1309.08H1918V1320.3ZM1918 1320.3V1297.86H1920V1320.3ZM1920 1320.3V1309.08H1921.25V1320.3ZM1921.25 1320.3V1297.86H1924.25V1320.3ZM1924.25 1320.3V1309.08H1925.25V1320.3ZM1925.25 1320.3V1297.86H1930.25V1320.3ZM1930.25 1320.3V1309.08H1931V1320.3ZM1931 1320.3V1297.86H1943.75V1320.3ZM1943.75 1320.3V1309.08H1944.75V1320.3ZM1944.75 1320.3V1297.86H1957.75V1320.3ZM1957.75 1320.3V1309.08H1959.5V1320.3ZM1959.5 1320.3V1297.86H1972.75V1320.3ZM1972.75 1320.3V1309.08H1999.75V1320.3ZM1999.75 1320.3V1297.86H2002.25V1320.3ZM2002.25 1320.3V1309.08H2026V1320.3ZM2026 1320.3V1297.86H2047.75V1320.3ZM2047.75 1320.3V1286.64H2050.25V1320.3ZM2050.25 1320.3V1297.86H2052.75V1320.3ZM2052.75 1320.3V1286.64H2054.5V1320.3ZM2054.5 1320.3V1297.86H2057V1320.3ZM2057 1320.3V1286.64H2095V1320.3ZM2095 1320.3V1275.42H2097V1320.3ZM2097 1320.3V1286.64H2105V1320.3ZM2105 1320.3V1275.42H2107V1320.3ZM2107 1320.3V1286.64H2126.25V1320.3ZM2126.25 1320.3V1275.42H2128.5V1320.3ZM2128.5 1320.3V1286.64H2158.75V1320.3ZM2158.75 1320.3V1275.42H2161V1320.3ZM2161 1320.3V1286.64H2190.25V1320.3ZM2190.25 1320.3V1275.42H2193.5V1320.3ZM2193.5 1320.3V1286.64H2197.25V1320.3ZM2197.25 1320.3V1275.42H2199.25V1320.3ZM2199.25 1320.3V1286.64H2202.25V1320.3ZM2202.25 1320.3V1275.42H2204.75V1320.3ZM2204.75 1320.3V1286.64H2206.25V1320.3ZM2206.25 1320.3V1275.42H2208V1320.3ZM2208 1320.3V1286.64H2210.75V1320.3ZM2210.75 1320.3V1275.42H2212.25V1320.3ZM2212.25 1320.3V1286.64H2221.75V1320.3ZM2221.75 1320.3V1275.42H2223.75V1320.3ZM2223.75 1320.3V1286.64H2225.5V1320.3ZM2225.5 1320.3V1297.86H2226.5V1320.3ZM2226.5 1320.3V1286.64H2229V1320.3ZM2229 1320.3V1297.86H2229.75V1320.3ZM2229.75 1320.3V1286.64H2230.5V1320.3ZM2230.5 1320.3V1275.42H2233V1320.3ZM2233 1320.3V1286.64H2234V1320.3ZM2234 1320.3V1297.86H2254.5V1320.3ZM2254.5 1320.3V1286.64H2256.25V1320.3ZM2256.25 1320.3V1297.86H2268.5V1320.3ZM2268.5 1320.3V1309.08H2283V1320.3ZM2283 1320.3V1297.86H2285.5V1320.3ZM2285.5 1320.3V1309.08H2286.5V1320.3ZM2286.5 1320.3V1297.86H2286.75V1320.3ZM2286.75 1320.3V1286.64H2288.75V1320.3ZM2288.75 1320.3V1297.86H2289.75V1320.3ZM2289.75 1320.3V1309.08H2290.75V1320.3ZM2290.75 1320.3V1297.86H2292.5V1320.3ZM2292.5 1320.3V1309.08H2293.5V1320.3ZM2293.5 1320.3V1297.86H2295.5V1320.3ZM2295.5 1320.3V1309.08H2296.5V1320.3ZM2296.5 1320.3V1297.86H2298.75V1320.3ZM2298.75 1320.3V1309.08H2300V1320.3ZM2300 1320.3V1297.86H2306.75V1320.3ZM2306.75 1320.3V1309.08H2311.5V1320.3Z" fill="#a0ecc4"/>
<path d="M236.25 1320.3V1286.64H237V1320.3ZM237 1320.3V1275.42H239.5V1320.3ZM239.5 1320.3V1286.64H242.5V1320.3ZM242.5 1320.3V1275.42H244.75V1320.3ZM244.75 1320.3V1286.64H248.25V1320.3ZM248.25 1320.3V1275.42H250.25V1320.3ZM250.25 1320.3V1286.64H252.75V1320.3ZM252.75 1320.3V1275.42H257V1320.3ZM257 1320.3V1286.64H262V1320.3ZM262 1320.3V1275.42H265V1320.3ZM265 1320.3V1286.64H278V1320.3ZM278 1320.3V1297.86H279.5V1320.3ZM279.5 1320.3V1286.64H281.5V1320.3ZM281.5 1320.3V1297.86H282.75V1320.3ZM282.75 1320.3V1286.64H283.75V1320.3ZM283.75 1320.3V1297.86H286.25V1320.3ZM286.25 1320.3V1286.64H288.5V1320.3ZM288.5 1320.3V1297.86H292.75V1320.3ZM292.75 1320.3V1309.08H294V1320.3ZM294 1320.3V1297.86H294.25V1320.3ZM294.25 1320.3V1286.64H296.5V1320.3ZM296.5 1320.3V1297.86H301.25V1320.3ZM301.25 1320.3V1309.08H302.75V1320.3ZM302.75 1320.3V1297.86H305.25V1320.3ZM305.25 1320.3V1309.08H324V1320.3ZM325.5 1320.3V1309.08H335V1320.3ZM336.75 1320.3V1309.08H358.25V1320.3ZM358.25 1320.3V1297.86H360.5V1320.3ZM360.5 1320.3V1309.08H384.25V1320.3ZM559.25 1320.3V1286.64H562.25V1320.3ZM562.25 1320.3V1297.86H564V1320.3ZM564 1320.3V1286.64H567V1320.3ZM567 1320.3V1297.86H568.25V1320.3ZM568.25 1320.3V1286.64H572.5V1320.3ZM572.5 1320.3V1174.44H575.75V1320.3ZM575.75 1320.3V1286.64H576.75V1320.3ZM576.75 1320.3V1241.76H579V1320.3ZM579.25 1320.3V1185.66H581.5V1320.3ZM581.5 1320.3V1017.36H582.5V1320.3ZM582.5 1320.3V983.7H584V1320.3ZM584 1320.3V1039.8H586V1320.3ZM586 1320.3V983.7H587.25V1320.3ZM587.25 1320.3V927.6H588.75V1320.3ZM588.75 1320.3V1163.22H590.75V1320.3ZM590.75 1320.3V1084.68H591.75V1320.3ZM591.75 1320.3V893.94H593.5V1320.3ZM593.5 1320.3V1230.54H595.25V1320.3ZM595.25 1320.3V1264.2H597.25V1320.3ZM597.25 1320.3V1275.42H600.75V1320.3ZM600.75 1320.3V1219.32H602.75V1320.3ZM602.75 1320.3V1275.42H606V1320.3ZM606 1320.3V1286.64H610V1320.3ZM610 1320.3V1196.88H613V1320.3ZM613 1320.3V1073.46H614.5V1320.3ZM614.5 1320.3V994.92H616V1320.3ZM616 1320.3V1241.76H617.5V1320.3ZM617.5 1320.3V1275.42H620V1320.3ZM620 1320.3V1118.34H621.25V1320.3ZM621.25 1320.3V1107.12H622.5V1320.3ZM622.5 1320.3V1275.42H624.75V1320.3ZM624.75 1320.3V1286.64H626.5V1320.3ZM626.5 1320.3V1275.42H628.25V1320.3ZM628.25 1320.3V1286.64H635V1320.3ZM635 1320.3V1275.42H637.25V1320.3ZM637.25 1320.3V1286.64H641.25V1320.3ZM641.25 1320.3V1275.42H643.25V1320.3ZM643.25 1320.3V1286.64H649.75V1320.3ZM649.75 1320.3V1275.42H652V1320.3ZM652 1320.3V1286.64H654.5V1320.3ZM654.5 1320.3V1241.76H656.5V1320.3ZM656.5 1320.3V1095.9H658.25V1320.3ZM658.25 1320.3V983.7H659.75V1320.3ZM659.75 1320.3V1174.44H661.5V1320.3ZM661.5 1320.3V1006.14H663.75V1320.3ZM663.75 1320.3V1084.68H665.75V1320.3ZM665.75 1320.3V1028.58H667V1320.3ZM667 1320.3V994.92H668.75V1320.3ZM668.75 1320.3V1275.42H671.25V1320.3ZM671.25 1320.3V1286.64H672.75V1320.3ZM672.75 1320.3V1297.86H676.25V1320.3ZM676.25 1320.3V1051.02H678.25V1320.3ZM678.25 1320.3V983.7H680V1320.3ZM680 1320.3V1107.12H681.5V1320.3ZM681.5 1320.3V1264.2H683.5V1320.3ZM683.5 1320.3V1185.66H685.75V1320.3ZM685.75 1320.3V1196.88H689.25V1320.3ZM689.25 1320.3V1219.32H691V1320.3ZM691 1320.3V1230.54H692.75V1320.3ZM692.75 1320.3V1286.64H694.75V1320.3ZM694.75 1320.3V1297.86H697.25V1320.3ZM697.25 1320.3V1286.64H699.25V1320.3ZM699.25 1320.3V1309.08H706.5V1320.3ZM882.25 1320.3V1297.86H885V1320.3ZM885 1320.3V1286.64H887.25V1320.3ZM887.25 1320.3V1297.86H892V1320.3ZM892 1320.3V1241.76H895.25V1320.3ZM895.25 1320.3V1286.64H896.75V1320.3ZM896.75 1320.3V1219.32H899V1320.3ZM899 1320.3V1129.56H900V1320.3ZM900 1320.3V1006.14H902V1320.3ZM902 1320.3V1129.56H903.25V1320.3ZM903.25 1320.3V1252.98H905V1320.3ZM905 1320.3V1275.42H905.75V1320.3ZM905.75 1320.3V1163.22H907.5V1320.3ZM907.5 1320.3V1275.42H912V1320.3ZM912 1320.3V1062.24H913.5V1320.3ZM913.5 1320.3V905.16H915.5V1320.3ZM915.5 1320.3V1208.1H917.75V1320.3ZM917.75 1320.3V1252.98H919V1320.3ZM919 1320.3V1140.78H921V1320.3ZM921 1320.3V1185.66H922.25V1320.3ZM922.25 1320.3V1286.64H924.5V1320.3ZM924.5 1320.3V1185.66H927V1320.3ZM927 1320.3V938.82H928.75V1320.3ZM928.75 1320.3V1241.76H930V1320.3ZM930 1320.3V1286.64H940V1320.3ZM940 1320.3V1297.86H941.75V1320.3ZM941.75 1320.3V1286.64H946.5V1320.3ZM946.5 1320.3V1275.42H947.5V1320.3ZM947.5 1320.3V1084.68H949.25V1320.3ZM949.25 1320.3V1297.86H951.25V1320.3ZM951.25 1320.3V1286.64H955.75V1320.3ZM955.75 1320.3V1297.86H958.5V1320.3ZM958.5 1320.3V1275.42H959.5V1320.3ZM959.5 1320.3V1230.54H961.25V1320.3ZM961.25 1320.3V1297.86H963.75V1320.3ZM963.75 1320.3V1286.64H965V1320.3ZM965 1320.3V1275.42H966.5V1320.3ZM966.5 1320.3V1286.64H969.25V1320.3ZM969.25 1320.3V1297.86H970.5V1320.3ZM970.5 1320.3V1286.64H973.5V1320.3ZM973.5 1320.3V1297.86H974.75V1320.3ZM974.75 1320.3V1286.64H976.75V1320.3ZM976.75 1320.3V1107.12H979V1320.3ZM979 1320.3V1219.32H980.75V1320.3ZM980.75 1320.3V1230.54H982.25V1320.3ZM982.25 1320.3V1174.44H983.25V1320.3ZM983.25 1320.3V1017.36H985.25V1320.3ZM985.25 1320.3V1174.44H986.5V1320.3ZM986.5 1320.3V1062.24H988V1320.3ZM988 1320.3V1140.78H989.75V1320.3ZM989.75 1320.3V1264.2H991.25V1320.3ZM991.25 1320.3V1286.64H996.25V1320.3ZM996.25 1320.3V1297.86H998.5V1320.3ZM998.5 1320.3V1252.98H1000V1320.3ZM1000 1320.3V893.94H1001.75V1320.3ZM1001.75 1320.3V950.04H1003.75V1320.3ZM1003.75 1320.3V1073.46H1005V1320.3ZM1005 1320.3V1275.42H1006.25V1320.3ZM1006.25 1320.3V1297.86H1009V1320.3ZM1009 1320.3V1286.64H1010.25V1320.3ZM1010.25 1320.3V1264.2H1013V1320.3ZM1013 1320.3V1219.32H1014.75V1320.3ZM1014.75 1320.3V1174.44H1018.25V1320.3ZM1018.25 1320.3V1219.32H1021V1320.3ZM1021 1320.3V1163.22H1022.75V1320.3ZM1022.75 1320.3V1219.32H1024.25V1320.3ZM1024.25 1320.3V1264.2H1026.5V1320.3ZM1026.5 1320.3V1297.86H1030.25V1320.3ZM1205.25 1320.3V1297.86H1209.25V1320.3ZM1209.25 1320.3V1286.64H1211.25V1320.3ZM1211.25 1320.3V1297.86H1219.25V1320.3ZM1219.25 1320.3V1264.2H1221V1320.3ZM1221 1320.3V1252.98H1222.5V1320.3ZM1222.5 1320.3V1275.42H1225V1320.3ZM1225 1320.3V1286.64H1226.5V1320.3ZM1226.5 1320.3V1275.42H1230.75V1320.3ZM1230.75 1320.3V1286.64H1233V1320.3ZM1233 1320.3V1275.42H1238.5V1320.3ZM1238.5 1320.3V1241.76H1239.75V1320.3ZM1239.75 1320.3V1152H1241V1320.3ZM1241 1320.3V983.7H1242.75V1320.3ZM1242.75 1320.3V1006.14H1244V1320.3ZM1244 1320.3V1219.32H1245V1320.3ZM1245 1320.3V1275.42H1247V1320.3ZM1247 1320.3V1286.64H1248V1320.3ZM1248 1320.3V1174.44H1249.25V1320.3ZM1249.25 1320.3V1006.14H1251.25V1320.3ZM1251.25 1320.3V1028.58H1253.75V1320.3ZM1253.75 1320.3V1129.56H1255V1320.3ZM1255 1320.3V1297.86H1256.25V1320.3ZM1256.25 1320.3V1286.64H1258.25V1320.3ZM1258.25 1320.3V1297.86H1261.5V1320.3ZM1261.5 1320.3V1286.64H1264V1320.3ZM1264 1320.3V1297.86H1265V1320.3ZM1265 1320.3V1275.42H1266.5V1320.3ZM1266.5 1320.3V1062.24H1267.75V1320.3ZM1267.75 1320.3V961.26H1269.75V1320.3ZM1269.75 1320.3V1275.42H1270.75V1320.3ZM1270.75 1320.3V1297.86H1277.75V1320.3ZM1277.75 1320.3V1286.64H1280V1320.3ZM1280 1320.3V1275.42H1281.75V1320.3ZM1281.75 1320.3V1297.86H1283.25V1320.3ZM1283.25 1320.3V1118.34H1285V1320.3ZM1285 1320.3V1252.98H1286.75V1320.3ZM1286.75 1320.3V1275.42H1288.25V1320.3ZM1288.25 1320.3V1286.64H1290.75V1320.3ZM1290.75 1320.3V1275.42H1292.75V1320.3ZM1292.75 1320.3V1286.64H1296.5V1320.3ZM1296.5 1320.3V1297.86H1299V1320.3ZM1299 1320.3V1286.64H1301.5V1320.3ZM1301.5 1320.3V1297.86H1303.25V1320.3ZM1303.25 1320.3V1219.32H1304.75V1320.3ZM1304.75 1320.3V1129.56H1306V1320.3ZM1306 1320.3V1006.14H1307.75V1320.3ZM1307.75 1320.3V1118.34H1308.75V1320.3ZM1308.75 1320.3V1219.32H1311.25V1320.3ZM1311.25 1320.3V1286.64H1313V1320.3ZM1313 1320.3V1174.44H1314V1320.3ZM1314 1320.3V1073.46H1316V1320.3ZM1316 1320.3V1208.1H1317V1320.3ZM1317 1320.3V1230.54H1318.5V1320.3ZM1318.5 1320.3V1208.1H1319.5V1320.3ZM1319.5 1320.3V1252.98H1320.25V1320.3ZM1320.25 1320.3V1286.64H1322.5V1320.3ZM1322.5 1320.3V1297.86H1325V1320.3ZM1325 1320.3V1208.1H1326.5V1320.3ZM1326.5 1320.3V1196.88H1328.25V1320.3ZM1328.25 1320.3V1241.76H1329.75V1320.3ZM1329.75 1320.3V1208.1H1331V1320.3ZM1331 1320.3V1230.54H1332V1320.3ZM1332 1320.3V1174.44H1333.5V1320.3ZM1333.5 1320.3V1286.64H1337.25V1320.3ZM1337.25 1320.3V1309.08H1339.5V1320.3ZM1339.5 1320.3V1297.86H1347.75V1320.3ZM1347.75 1320.3V1309.08H1353.25V1320.3ZM1528.25 1320.3V1286.64H1534.5V1320.3ZM1534.5 1320.3V1275.42H1536.25V1320.3ZM1536.25 1320.3V1286.64H1541V1320.3ZM1541 1320.3V1264.2H1542.25V1320.3ZM1542.25 1320.3V1230.54H1544.25V1320.3ZM1544.25 1320.3V1264.2H1545.5V1320.3ZM1545.5 1320.3V1241.76H1546.75V1320.3ZM1546.75 1320.3V1028.58H1548.25V1320.3ZM1548.25 1320.3V849.06H1550V1320.3ZM1550 1320.3V1118.34H1552.75V1320.3ZM1552.75 1320.3V1252.98H1554.75V1320.3ZM1554.75 1320.3V1241.76H1557V1320.3ZM1557 1320.3V1017.36H1558.5V1320.3ZM1558.5 1320.3V837.84H1560V1320.3ZM1560 1320.3V1051.02H1561.25V1320.3ZM1561.25 1320.3V1062.24H1562.5V1320.3ZM1562.5 1320.3V1230.54H1563.75V1320.3ZM1563.75 1320.3V1129.56H1565.75V1320.3ZM1565.75 1320.3V1230.54H1568.75V1320.3ZM1568.75 1320.3V1241.76H1570.25V1320.3ZM1570.25 1320.3V1252.98H1571.5V1320.3ZM1571.5 1320.3V1129.56H1572.75V1320.3ZM1572.75 1320.3V1051.02H1574.25V1320.3ZM1574.25 1320.3V1152H1576V1320.3ZM1576 1320.3V1196.88H1577.5V1320.3ZM1577.5 1320.3V1140.78H1579.25V1320.3ZM1579.25 1320.3V860.28H1581V1320.3ZM1581 1320.3V1028.58H1582.75V1320.3ZM1582.75 1320.3V1095.9H1584.5V1320.3ZM1584.5 1320.3V1118.34H1586V1320.3ZM1586 1320.3V1208.1H1587V1320.3ZM1587 1320.3V1264.2H1589V1320.3ZM1589 1320.3V1275.42H1591.5V1320.3ZM1591.5 1320.3V1264.2H1593V1320.3ZM1593 1320.3V1275.42H1594.25V1320.3ZM1594.25 1320.3V1264.2H1596V1320.3ZM1596 1320.3V1230.54H1598.25V1320.3ZM1598.25 1320.3V1275.42H1602.75V1320.3ZM1602.75 1320.3V1264.2H1605.75V1320.3ZM1605.75 1320.3V1185.66H1607.25V1320.3ZM1607.25 1320.3V1174.44H1609.25V1320.3ZM1609.25 1320.3V1196.88H1610.5V1320.3ZM1610.5 1320.3V1264.2H1614.25V1320.3ZM1614.25 1320.3V1252.98H1616.25V1320.3ZM1616.25 1320.3V1264.2H1617.5V1320.3ZM1617.5 1320.3V1028.58H1619.5V1320.3ZM1619.5 1320.3V1219.32H1621V1320.3ZM1621 1320.3V1241.76H1622.75V1320.3ZM1622.75 1320.3V1118.34H1624V1320.3ZM1624 1320.3V994.92H1625.75V1320.3ZM1625.75 1320.3V1095.9H1627.25V1320.3ZM1627.25 1320.3V1073.46H1628.75V1320.3ZM1628.75 1320.3V950.04H1630.5V1320.3ZM1630.5 1320.3V1152H1633V1320.3ZM1633 1320.3V1264.2H1634.5V1320.3ZM1634.5 1320.3V1275.42H1637V1320.3ZM1637 1320.3V1230.54H1642.25V1320.3ZM1642.25 1320.3V1275.42H1643.5V1320.3ZM1643.5 1320.3V1297.86H1646.5V1320.3ZM1646.5 1320.3V1252.98H1647.75V1320.3ZM1647.75 1320.3V1185.66H1649.75V1320.3ZM1649.75 1320.3V1196.88H1652V1320.3ZM1652 1320.3V1152H1654.25V1320.3ZM1654.25 1320.3V1174.44H1655.5V1320.3ZM1655.5 1320.3V1219.32H1656.75V1320.3ZM1656.75 1320.3V1275.42H1658V1320.3ZM1658 1320.3V1286.64H1659.25V1320.3ZM1659.25 1320.3V1297.86H1661.25V1320.3ZM1661.25 1320.3V1309.08H1662.75V1320.3ZM1662.75 1320.3V1297.86H1664.5V1320.3ZM1664.5 1320.3V1309.08H1667.75V1320.3ZM1667.75 1320.3V1297.86H1670.25V1320.3ZM1670.25 1320.3V1309.08H1675.25V1320.3ZM1675.5 1320.3V1309.08H1676.25V1320.3Z" fill="#25916f"/>
<defs><pattern id="seam" x="155.5" y="0" width="2.243" height="40" patternUnits="userSpaceOnUse"><rect x="1.95" y="0" width="0.3" height="40" fill="#fff" fill-opacity="0.28"/></pattern><clipPath id="bc"><path d="M155.5 1320.3V1286.64H196.75V1320.3ZM196.75 1320.3V1275.42H199.25V1320.3ZM199.25 1320.3V1286.64H229V1320.3ZM229 1320.3V1275.42H231.5V1320.3ZM231.5 1320.3V1286.64H236.25V1320.3ZM384.25 1320.3V1309.08H407.5V1320.3ZM407.5 1320.3V1297.86H410V1320.3ZM410 1320.3V1309.08H448.5V1320.3ZM448.5 1320.3V1297.86H468.5V1320.3ZM468.5 1320.3V1286.64H482.75V1320.3ZM482.75 1320.3V1275.42H487V1320.3ZM487 1320.3V1286.64H516.25V1320.3ZM516.25 1320.3V1275.42H518.5V1320.3ZM518.5 1320.3V1286.64H518.75V1320.3ZM518.75 1320.3V1297.86H520.5V1320.3ZM520.5 1320.3V1286.64H522.75V1320.3ZM522.75 1320.3V1297.86H527.75V1320.3ZM527.75 1320.3V1286.64H529.75V1320.3ZM529.75 1320.3V1297.86H537.75V1320.3ZM537.75 1320.3V1286.64H539.75V1320.3ZM539.75 1320.3V1297.86H545V1320.3ZM545 1320.3V1286.64H547.25V1320.3ZM547.25 1320.3V1297.86H549.75V1320.3ZM549.75 1320.3V1286.64H551.5V1320.3ZM551.5 1320.3V1297.86H553V1320.3ZM553 1320.3V1286.64H554.75V1320.3ZM554.75 1320.3V1297.86H556.5V1320.3ZM556.5 1320.3V1286.64H559.25V1320.3ZM707.25 1320.3V1309.08H711.25V1320.3ZM713.75 1320.3V1309.08H716.25V1320.3ZM718 1320.3V1309.08H728V1320.3ZM729.25 1320.3V1309.08H734.25V1320.3ZM736 1320.3V1309.08H741.75V1320.3ZM744 1320.3V1309.08H756V1320.3ZM757.5 1320.3V1309.08H765.75V1320.3ZM767.25 1320.3V1309.08H772V1320.3ZM773.25 1320.3V1309.08H796.75V1320.3ZM798 1320.3V1309.08H810.25V1320.3ZM811 1320.3V1309.08H820V1320.3ZM821.25 1320.3V1309.08H846.5V1320.3ZM847.25 1320.3V1297.86H849.25V1320.3ZM849.25 1320.3V1309.08H854V1320.3ZM854 1320.3V1297.86H860.5V1320.3ZM860.5 1320.3V1309.08H862.25V1320.3ZM862.25 1320.3V1297.86H864.75V1320.3ZM864.75 1320.3V1309.08H865.75V1320.3ZM865.75 1320.3V1297.86H882.25V1320.3ZM1030.25 1320.3V1297.86H1035.5V1320.3ZM1035.5 1320.3V1309.08H1038V1320.3ZM1038 1320.3V1297.86H1040V1320.3ZM1040 1320.3V1252.98H1042.25V1320.3ZM1042.25 1320.3V1264.2H1043.5V1320.3ZM1043.5 1320.3V1309.08H1046.75V1320.3ZM1048 1320.3V1309.08H1050V1320.3ZM1053.5 1320.3V1309.08H1055.25V1320.3ZM1058 1320.3V1309.08H1060V1320.3ZM1062.75 1320.3V1309.08H1064.75V1320.3ZM1067 1320.3V1309.08H1070.75V1320.3ZM1072.25 1320.3V1309.08H1074.75V1320.3ZM1077.25 1320.3V1297.86H1079.5V1320.3ZM1079.5 1320.3V1309.08H1082.75V1320.3ZM1083.5 1320.3V1309.08H1086V1320.3ZM1088.25 1320.3V1309.08H1090.25V1320.3ZM1092 1320.3V1309.08H1093.5V1320.3ZM1096 1320.3V1309.08H1098.25V1320.3ZM1100.5 1320.3V1309.08H1102.75V1320.3ZM1105 1320.3V1309.08H1107V1320.3ZM1108.25 1320.3V1309.08H1129.25V1320.3ZM1131 1320.3V1309.08H1143.25V1320.3ZM1143.25 1320.3V1297.86H1145.5V1320.3ZM1147 1320.3V1309.08H1149.25V1320.3ZM1150 1320.3V1309.08H1152.25V1320.3ZM1153.5 1320.3V1309.08H1156V1320.3ZM1156.5 1320.3V1309.08H1158.75V1320.3ZM1159.5 1320.3V1309.08H1162.25V1320.3ZM1163.5 1320.3V1309.08H1173.5V1320.3ZM1173.5 1320.3V1297.86H1175.5V1320.3ZM1175.5 1320.3V1309.08H1182.75V1320.3ZM1184 1320.3V1309.08H1189.25V1320.3ZM1189.25 1320.3V1297.86H1191.5V1320.3ZM1191.5 1320.3V1286.64H1193.75V1320.3ZM1193.75 1320.3V1297.86H1194.25V1320.3ZM1194.25 1320.3V1309.08H1195.25V1320.3ZM1195.25 1320.3V1297.86H1199V1320.3ZM1199 1320.3V1309.08H1199.75V1320.3ZM1199.75 1320.3V1297.86H1205.25V1320.3ZM1353.25 1320.3V1309.08H1365V1320.3ZM1365 1320.3V1297.86H1367.5V1320.3ZM1367.5 1320.3V1309.08H1376.5V1320.3ZM1378.75 1320.3V1309.08H1381.75V1320.3ZM1384.25 1320.3V1309.08H1386.5V1320.3ZM1389.75 1320.3V1309.08H1392.25V1320.3ZM1394.25 1320.3V1309.08H1396.5V1320.3ZM1399.5 1320.3V1309.08H1402.25V1320.3ZM1404.25 1320.3V1309.08H1406.5V1320.3ZM1408 1320.3V1309.08H1432.5V1320.3ZM1432.5 1320.3V1297.86H1434.5V1320.3ZM1434.5 1320.3V1309.08H1435.75V1320.3ZM1435.75 1320.3V1297.86H1440.75V1320.3ZM1440.75 1320.3V1309.08H1441.5V1320.3ZM1441.5 1320.3V1297.86H1445V1320.3ZM1445 1320.3V1309.08H1445.75V1320.3ZM1445.75 1320.3V1297.86H1469.5V1320.3ZM1469.5 1320.3V1286.64H1471.75V1320.3ZM1471.75 1320.3V1297.86H1493V1320.3ZM1493 1320.3V1286.64H1495V1320.3ZM1495 1320.3V1297.86H1497.75V1320.3ZM1497.75 1320.3V1286.64H1499.5V1320.3ZM1499.5 1320.3V1297.86H1502.25V1320.3ZM1502.25 1320.3V1286.64H1506V1320.3ZM1506 1320.3V1297.86H1510.25V1320.3ZM1510.25 1320.3V1286.64H1512V1320.3ZM1512 1320.3V1297.86H1517.25V1320.3ZM1517.25 1320.3V1286.64H1519.75V1320.3ZM1519.75 1320.3V1297.86H1524.5V1320.3ZM1524.5 1320.3V1286.64H1526.5V1320.3ZM1526.5 1320.3V1297.86H1528.25V1320.3ZM1676.25 1320.3V1309.08H1703.5V1320.3ZM1703.5 1320.3V1297.86H1706V1320.3ZM1706 1320.3V1309.08H1716.75V1320.3ZM1716.75 1320.3V1297.86H1719.25V1320.3ZM1719.25 1320.3V1309.08H1720.25V1320.3ZM1720.25 1320.3V1297.86H1722.75V1320.3ZM1722.75 1320.3V1309.08H1723.5V1320.3ZM1723.5 1320.3V1297.86H1742.75V1320.3ZM1742.75 1320.3V1286.64H1745V1320.3ZM1745 1320.3V1297.86H1762V1320.3ZM1762 1320.3V1286.64H1768.75V1320.3ZM1768.75 1320.3V1297.86H1770V1320.3ZM1770 1320.3V1286.64H1775.5V1320.3ZM1775.5 1320.3V1275.42H1777.5V1320.3ZM1777.5 1320.3V1286.64H1783.75V1320.3ZM1783.75 1320.3V1297.86H1785.75V1320.3ZM1785.75 1320.3V1286.64H1791.25V1320.3ZM1791.25 1320.3V1297.86H1793V1320.3ZM1793 1320.3V1286.64H1795.75V1320.3ZM1795.75 1320.3V1297.86H1797.75V1320.3ZM1797.75 1320.3V1286.64H1800V1320.3ZM1800 1320.3V1297.86H1803.75V1320.3ZM1803.75 1320.3V1286.64H1806.25V1320.3ZM1806.25 1320.3V1297.86H1808V1320.3ZM1808 1320.3V1286.64H1810V1320.3ZM1810 1320.3V1297.86H1842V1320.3ZM1842 1320.3V1286.64H1844V1320.3ZM1844 1320.3V1297.86H1880V1320.3ZM1880 1320.3V1309.08H1881.25V1320.3ZM1881.25 1320.3V1297.86H1891V1320.3ZM1891 1320.3V1309.08H1892V1320.3ZM1892 1320.3V1297.86H1896V1320.3ZM1896 1320.3V1309.08H1897V1320.3ZM1897 1320.3V1297.86H1900V1320.3ZM1900 1320.3V1309.08H1902V1320.3ZM1902 1320.3V1297.86H1904.5V1320.3ZM1904.5 1320.3V1309.08H1908V1320.3ZM1908 1320.3V1297.86H1911V1320.3ZM1911 1320.3V1309.08H1913V1320.3ZM1913 1320.3V1297.86H1915.5V1320.3ZM1915.5 1320.3V1309.08H1918V1320.3ZM1918 1320.3V1297.86H1920V1320.3ZM1920 1320.3V1309.08H1921.25V1320.3ZM1921.25 1320.3V1297.86H1924.25V1320.3ZM1924.25 1320.3V1309.08H1925.25V1320.3ZM1925.25 1320.3V1297.86H1930.25V1320.3ZM1930.25 1320.3V1309.08H1931V1320.3ZM1931 1320.3V1297.86H1943.75V1320.3ZM1943.75 1320.3V1309.08H1944.75V1320.3ZM1944.75 1320.3V1297.86H1957.75V1320.3ZM1957.75 1320.3V1309.08H1959.5V1320.3ZM1959.5 1320.3V1297.86H1972.75V1320.3ZM1972.75 1320.3V1309.08H1999.75V1320.3ZM1999.75 1320.3V1297.86H2002.25V1320.3ZM2002.25 1320.3V1309.08H2026V1320.3ZM2026 1320.3V1297.86H2047.75V1320.3ZM2047.75 1320.3V1286.64H2050.25V1320.3ZM2050.25 1320.3V1297.86H2052.75V1320.3ZM2052.75 1320.3V1286.64H2054.5V1320.3ZM2054.5 1320.3V1297.86H2057V1320.3ZM2057 1320.3V1286.64H2095V1320.3ZM2095 1320.3V1275.42H2097V1320.3ZM2097 1320.3V1286.64H2105V1320.3ZM2105 1320.3V1275.42H2107V1320.3ZM2107 1320.3V1286.64H2126.25V1320.3ZM2126.25 1320.3V1275.42H2128.5V1320.3ZM2128.5 1320.3V1286.64H2158.75V1320.3ZM2158.75 1320.3V1275.42H2161V1320.3ZM2161 1320.3V1286.64H2190.25V1320.3ZM2190.25 1320.3V1275.42H2193.5V1320.3ZM2193.5 1320.3V1286.64H2197.25V1320.3ZM2197.25 1320.3V1275.42H2199.25V1320.3ZM2199.25 1320.3V1286.64H2202.25V1320.3ZM2202.25 1320.3V1275.42H2204.75V1320.3ZM2204.75 1320.3V1286.64H2206.25V1320.3ZM2206.25 1320.3V1275.42H2208V1320.3ZM2208 1320.3V1286.64H2210.75V1320.3ZM2210.75 1320.3V1275.42H2212.25V1320.3ZM2212.25 1320.3V1286.64H2221.75V1320.3ZM2221.75 1320.3V1275.42H2223.75V1320.3ZM2223.75 1320.3V1286.64H2225.5V1320.3ZM2225.5 1320.3V1297.86H2226.5V1320.3ZM2226.5 1320.3V1286.64H2229V1320.3ZM2229 1320.3V1297.86H2229.75V1320.3ZM2229.75 1320.3V1286.64H2230.5V1320.3ZM2230.5 1320.3V1275.42H2233V1320.3ZM2233 1320.3V1286.64H2234V1320.3ZM2234 1320.3V1297.86H2254.5V1320.3ZM2254.5 1320.3V1286.64H2256.25V1320.3ZM2256.25 1320.3V1297.86H2268.5V1320.3ZM2268.5 1320.3V1309.08H2283V1320.3ZM2283 1320.3V1297.86H2285.5V1320.3ZM2285.5 1320.3V1309.08H2286.5V1320.3ZM2286.5 1320.3V1297.86H2286.75V1320.3ZM2286.75 1320.3V1286.64H2288.75V1320.3ZM2288.75 1320.3V1297.86H2289.75V1320.3ZM2289.75 1320.3V1309.08H2290.75V1320.3ZM2290.75 1320.3V1297.86H2292.5V1320.3ZM2292.5 1320.3V1309.08H2293.5V1320.3ZM2293.5 1320.3V1297.86H2295.5V1320.3ZM2295.5 1320.3V1309.08H2296.5V1320.3ZM2296.5 1320.3V1297.86H2298.75V1320.3ZM2298.75 1320.3V1309.08H2300V1320.3ZM2300 1320.3V1297.86H2306.75V1320.3ZM2306.75 1320.3V1309.08H2311.5V1320.3ZM236.25 1320.3V1286.64H237V1320.3ZM237 1320.3V1275.42H239.5V1320.3ZM239.5 1320.3V1286.64H242.5V1320.3ZM242.5 1320.3V1275.42H244.75V1320.3ZM244.75 1320.3V1286.64H248.25V1320.3ZM248.25 1320.3V1275.42H250.25V1320.3ZM250.25 1320.3V1286.64H252.75V1320.3ZM252.75 1320.3V1275.42H257V1320.3ZM257 1320.3V1286.64H262V1320.3ZM262 1320.3V1275.42H265V1320.3ZM265 1320.3V1286.64H278V1320.3ZM278 1320.3V1297.86H279.5V1320.3ZM279.5 1320.3V1286.64H281.5V1320.3ZM281.5 1320.3V1297.86H282.75V1320.3ZM282.75 1320.3V1286.64H283.75V1320.3ZM283.75 1320.3V1297.86H286.25V1320.3ZM286.25 1320.3V1286.64H288.5V1320.3ZM288.5 1320.3V1297.86H292.75V1320.3ZM292.75 1320.3V1309.08H294V1320.3ZM294 1320.3V1297.86H294.25V1320.3ZM294.25 1320.3V1286.64H296.5V1320.3ZM296.5 1320.3V1297.86H301.25V1320.3ZM301.25 1320.3V1309.08H302.75V1320.3ZM302.75 1320.3V1297.86H305.25V1320.3ZM305.25 1320.3V1309.08H324V1320.3ZM325.5 1320.3V1309.08H335V1320.3ZM336.75 1320.3V1309.08H358.25V1320.3ZM358.25 1320.3V1297.86H360.5V1320.3ZM360.5 1320.3V1309.08H384.25V1320.3ZM559.25 1320.3V1286.64H562.25V1320.3ZM562.25 1320.3V1297.86H564V1320.3ZM564 1320.3V1286.64H567V1320.3ZM567 1320.3V1297.86H568.25V1320.3ZM568.25 1320.3V1286.64H572.5V1320.3ZM572.5 1320.3V1174.44H575.75V1320.3ZM575.75 1320.3V1286.64H576.75V1320.3ZM576.75 1320.3V1241.76H579V1320.3ZM579.25 1320.3V1185.66H581.5V1320.3ZM581.5 1320.3V1017.36H582.5V1320.3ZM582.5 1320.3V983.7H584V1320.3ZM584 1320.3V1039.8H586V1320.3ZM586 1320.3V983.7H587.25V1320.3ZM587.25 1320.3V927.6H588.75V1320.3ZM588.75 1320.3V1163.22H590.75V1320.3ZM590.75 1320.3V1084.68H591.75V1320.3ZM591.75 1320.3V893.94H593.5V1320.3ZM593.5 1320.3V1230.54H595.25V1320.3ZM595.25 1320.3V1264.2H597.25V1320.3ZM597.25 1320.3V1275.42H600.75V1320.3ZM600.75 1320.3V1219.32H602.75V1320.3ZM602.75 1320.3V1275.42H606V1320.3ZM606 1320.3V1286.64H610V1320.3ZM610 1320.3V1196.88H613V1320.3ZM613 1320.3V1073.46H614.5V1320.3ZM614.5 1320.3V994.92H616V1320.3ZM616 1320.3V1241.76H617.5V1320.3ZM617.5 1320.3V1275.42H620V1320.3ZM620 1320.3V1118.34H621.25V1320.3ZM621.25 1320.3V1107.12H622.5V1320.3ZM622.5 1320.3V1275.42H624.75V1320.3ZM624.75 1320.3V1286.64H626.5V1320.3ZM626.5 1320.3V1275.42H628.25V1320.3ZM628.25 1320.3V1286.64H635V1320.3ZM635 1320.3V1275.42H637.25V1320.3ZM637.25 1320.3V1286.64H641.25V1320.3ZM641.25 1320.3V1275.42H643.25V1320.3ZM643.25 1320.3V1286.64H649.75V1320.3ZM649.75 1320.3V1275.42H652V1320.3ZM652 1320.3V1286.64H654.5V1320.3ZM654.5 1320.3V1241.76H656.5V1320.3ZM656.5 1320.3V1095.9H658.25V1320.3ZM658.25 1320.3V983.7H659.75V1320.3ZM659.75 1320.3V1174.44H661.5V1320.3ZM661.5 1320.3V1006.14H663.75V1320.3ZM663.75 1320.3V1084.68H665.75V1320.3ZM665.75 1320.3V1028.58H667V1320.3ZM667 1320.3V994.92H668.75V1320.3ZM668.75 1320.3V1275.42H671.25V1320.3ZM671.25 1320.3V1286.64H672.75V1320.3ZM672.75 1320.3V1297.86H676.25V1320.3ZM676.25 1320.3V1051.02H678.25V1320.3ZM678.25 1320.3V983.7H680V1320.3ZM680 1320.3V1107.12H681.5V1320.3ZM681.5 1320.3V1264.2H683.5V1320.3ZM683.5 1320.3V1185.66H685.75V1320.3ZM685.75 1320.3V1196.88H689.25V1320.3ZM689.25 1320.3V1219.32H691V1320.3ZM691 1320.3V1230.54H692.75V1320.3ZM692.75 1320.3V1286.64H694.75V1320.3ZM694.75 1320.3V1297.86H697.25V1320.3ZM697.25 1320.3V1286.64H699.25V1320.3ZM699.25 1320.3V1309.08H706.5V1320.3ZM882.25 1320.3V1297.86H885V1320.3ZM885 1320.3V1286.64H887.25V1320.3ZM887.25 1320.3V1297.86H892V1320.3ZM892 1320.3V1241.76H895.25V1320.3ZM895.25 1320.3V1286.64H896.75V1320.3ZM896.75 1320.3V1219.32H899V1320.3ZM899 1320.3V1129.56H900V1320.3ZM900 1320.3V1006.14H902V1320.3ZM902 1320.3V1129.56H903.25V1320.3ZM903.25 1320.3V1252.98H905V1320.3ZM905 1320.3V1275.42H905.75V1320.3ZM905.75 1320.3V1163.22H907.5V1320.3ZM907.5 1320.3V1275.42H912V1320.3ZM912 1320.3V1062.24H913.5V1320.3ZM913.5 1320.3V905.16H915.5V1320.3ZM915.5 1320.3V1208.1H917.75V1320.3ZM917.75 1320.3V1252.98H919V1320.3ZM919 1320.3V1140.78H921V1320.3ZM921 1320.3V1185.66H922.25V1320.3ZM922.25 1320.3V1286.64H924.5V1320.3ZM924.5 1320.3V1185.66H927V1320.3ZM927 1320.3V938.82H928.75V1320.3ZM928.75 1320.3V1241.76H930V1320.3ZM930 1320.3V1286.64H940V1320.3ZM940 1320.3V1297.86H941.75V1320.3ZM941.75 1320.3V1286.64H946.5V1320.3ZM946.5 1320.3V1275.42H947.5V1320.3ZM947.5 1320.3V1084.68H949.25V1320.3ZM949.25 1320.3V1297.86H951.25V1320.3ZM951.25 1320.3V1286.64H955.75V1320.3ZM955.75 1320.3V1297.86H958.5V1320.3ZM958.5 1320.3V1275.42H959.5V1320.3ZM959.5 1320.3V1230.54H961.25V1320.3ZM961.25 1320.3V1297.86H963.75V1320.3ZM963.75 1320.3V1286.64H965V1320.3ZM965 1320.3V1275.42H966.5V1320.3ZM966.5 1320.3V1286.64H969.25V1320.3ZM969.25 1320.3V1297.86H970.5V1320.3ZM970.5 1320.3V1286.64H973.5V1320.3ZM973.5 1320.3V1297.86H974.75V1320.3ZM974.75 1320.3V1286.64H976.75V1320.3ZM976.75 1320.3V1107.12H979V1320.3ZM979 1320.3V1219.32H980.75V1320.3ZM980.75 1320.3V1230.54H982.25V1320.3ZM982.25 1320.3V1174.44H983.25V1320.3ZM983.25 1320.3V1017.36H985.25V1320.3ZM985.25 1320.3V1174.44H986.5V1320.3ZM986.5 1320.3V1062.24H988V1320.3ZM988 1320.3V1140.78H989.75V1320.3ZM989.75 1320.3V1264.2H991.25V1320.3ZM991.25 1320.3V1286.64H996.25V1320.3ZM996.25 1320.3V1297.86H998.5V1320.3ZM998.5 1320.3V1252.98H1000V1320.3ZM1000 1320.3V893.94H1001.75V1320.3ZM1001.75 1320.3V950.04H1003.75V1320.3ZM1003.75 1320.3V1073.46H1005V1320.3ZM1005 1320.3V1275.42H1006.25V1320.3ZM1006.25 1320.3V1297.86H1009V1320.3ZM1009 1320.3V1286.64H1010.25V1320.3ZM1010.25 1320.3V1264.2H1013V1320.3ZM1013 1320.3V1219.32H1014.75V1320.3ZM1014.75 1320.3V1174.44H1018.25V1320.3ZM1018.25 1320.3V1219.32H1021V1320.3ZM1021 1320.3V1163.22H1022.75V1320.3ZM1022.75 1320.3V1219.32H1024.25V1320.3ZM1024.25 1320.3V1264.2H1026.5V1320.3ZM1026.5 1320.3V1297.86H1030.25V1320.3ZM1205.25 1320.3V1297.86H1209.25V1320.3ZM1209.25 1320.3V1286.64H1211.25V1320.3ZM1211.25 1320.3V1297.86H1219.25V1320.3ZM1219.25 1320.3V1264.2H1221V1320.3ZM1221 1320.3V1252.98H1222.5V1320.3ZM1222.5 1320.3V1275.42H1225V1320.3ZM1225 1320.3V1286.64H1226.5V1320.3ZM1226.5 1320.3V1275.42H1230.75V1320.3ZM1230.75 1320.3V1286.64H1233V1320.3ZM1233 1320.3V1275.42H1238.5V1320.3ZM1238.5 1320.3V1241.76H1239.75V1320.3ZM1239.75 1320.3V1152H1241V1320.3ZM1241 1320.3V983.7H1242.75V1320.3ZM1242.75 1320.3V1006.14H1244V1320.3ZM1244 1320.3V1219.32H1245V1320.3ZM1245 1320.3V1275.42H1247V1320.3ZM1247 1320.3V1286.64H1248V1320.3ZM1248 1320.3V1174.44H1249.25V1320.3ZM1249.25 1320.3V1006.14H1251.25V1320.3ZM1251.25 1320.3V1028.58H1253.75V1320.3ZM1253.75 1320.3V1129.56H1255V1320.3ZM1255 1320.3V1297.86H1256.25V1320.3ZM1256.25 1320.3V1286.64H1258.25V1320.3ZM1258.25 1320.3V1297.86H1261.5V1320.3ZM1261.5 1320.3V1286.64H1264V1320.3ZM1264 1320.3V1297.86H1265V1320.3ZM1265 1320.3V1275.42H1266.5V1320.3ZM1266.5 1320.3V1062.24H1267.75V1320.3ZM1267.75 1320.3V961.26H1269.75V1320.3ZM1269.75 1320.3V1275.42H1270.75V1320.3ZM1270.75 1320.3V1297.86H1277.75V1320.3ZM1277.75 1320.3V1286.64H1280V1320.3ZM1280 1320.3V1275.42H1281.75V1320.3ZM1281.75 1320.3V1297.86H1283.25V1320.3ZM1283.25 1320.3V1118.34H1285V1320.3ZM1285 1320.3V1252.98H1286.75V1320.3ZM1286.75 1320.3V1275.42H1288.25V1320.3ZM1288.25 1320.3V1286.64H1290.75V1320.3ZM1290.75 1320.3V1275.42H1292.75V1320.3ZM1292.75 1320.3V1286.64H1296.5V1320.3ZM1296.5 1320.3V1297.86H1299V1320.3ZM1299 1320.3V1286.64H1301.5V1320.3ZM1301.5 1320.3V1297.86H1303.25V1320.3ZM1303.25 1320.3V1219.32H1304.75V1320.3ZM1304.75 1320.3V1129.56H1306V1320.3ZM1306 1320.3V1006.14H1307.75V1320.3ZM1307.75 1320.3V1118.34H1308.75V1320.3ZM1308.75 1320.3V1219.32H1311.25V1320.3ZM1311.25 1320.3V1286.64H1313V1320.3ZM1313 1320.3V1174.44H1314V1320.3ZM1314 1320.3V1073.46H1316V1320.3ZM1316 1320.3V1208.1H1317V1320.3ZM1317 1320.3V1230.54H1318.5V1320.3ZM1318.5 1320.3V1208.1H1319.5V1320.3ZM1319.5 1320.3V1252.98H1320.25V1320.3ZM1320.25 1320.3V1286.64H1322.5V1320.3ZM1322.5 1320.3V1297.86H1325V1320.3ZM1325 1320.3V1208.1H1326.5V1320.3ZM1326.5 1320.3V1196.88H1328.25V1320.3ZM1328.25 1320.3V1241.76H1329.75V1320.3ZM1329.75 1320.3V1208.1H1331V1320.3ZM1331 1320.3V1230.54H1332V1320.3ZM1332 1320.3V1174.44H1333.5V1320.3ZM1333.5 1320.3V1286.64H1337.25V1320.3ZM1337.25 1320.3V1309.08H1339.5V1320.3ZM1339.5 1320.3V1297.86H1347.75V1320.3ZM1347.75 1320.3V1309.08H1353.25V1320.3ZM1528.25 1320.3V1286.64H1534.5V1320.3ZM1534.5 1320.3V1275.42H1536.25V1320.3ZM1536.25 1320.3V1286.64H1541V1320.3ZM1541 1320.3V1264.2H1542.25V1320.3ZM1542.25 1320.3V1230.54H1544.25V1320.3ZM1544.25 1320.3V1264.2H1545.5V1320.3ZM1545.5 1320.3V1241.76H1546.75V1320.3ZM1546.75 1320.3V1028.58H1548.25V1320.3ZM1548.25 1320.3V849.06H1550V1320.3ZM1550 1320.3V1118.34H1552.75V1320.3ZM1552.75 1320.3V1252.98H1554.75V1320.3ZM1554.75 1320.3V1241.76H1557V1320.3ZM1557 1320.3V1017.36H1558.5V1320.3ZM1558.5 1320.3V837.84H1560V1320.3ZM1560 1320.3V1051.02H1561.25V1320.3ZM1561.25 1320.3V1062.24H1562.5V1320.3ZM1562.5 1320.3V1230.54H1563.75V1320.3ZM1563.75 1320.3V1129.56H1565.75V1320.3ZM1565.75 1320.3V1230.54H1568.75V1320.3ZM1568.75 1320.3V1241.76H1570.25V1320.3ZM1570.25 1320.3V1252.98H1571.5V1320.3ZM1571.5 1320.3V1129.56H1572.75V1320.3ZM1572.75 1320.3V1051.02H1574.25V1320.3ZM1574.25 1320.3V1152H1576V1320.3ZM1576 1320.3V1196.88H1577.5V1320.3ZM1577.5 1320.3V1140.78H1579.25V1320.3ZM1579.25 1320.3V860.28H1581V1320.3ZM1581 1320.3V1028.58H1582.75V1320.3ZM1582.75 1320.3V1095.9H1584.5V1320.3ZM1584.5 1320.3V1118.34H1586V1320.3ZM1586 1320.3V1208.1H1587V1320.3ZM1587 1320.3V1264.2H1589V1320.3ZM1589 1320.3V1275.42H1591.5V1320.3ZM1591.5 1320.3V1264.2H1593V1320.3ZM1593 1320.3V1275.42H1594.25V1320.3ZM1594.25 1320.3V1264.2H1596V1320.3ZM1596 1320.3V1230.54H1598.25V1320.3ZM1598.25 1320.3V1275.42H1602.75V1320.3ZM1602.75 1320.3V1264.2H1605.75V1320.3ZM1605.75 1320.3V1185.66H1607.25V1320.3ZM1607.25 1320.3V1174.44H1609.25V1320.3ZM1609.25 1320.3V1196.88H1610.5V1320.3ZM1610.5 1320.3V1264.2H1614.25V1320.3ZM1614.25 1320.3V1252.98H1616.25V1320.3ZM1616.25 1320.3V1264.2H1617.5V1320.3ZM1617.5 1320.3V1028.58H1619.5V1320.3ZM1619.5 1320.3V1219.32H1621V1320.3ZM1621 1320.3V1241.76H1622.75V1320.3ZM1622.75 1320.3V1118.34H1624V1320.3ZM1624 1320.3V994.92H1625.75V1320.3ZM1625.75 1320.3V1095.9H1627.25V1320.3ZM1627.25 1320.3V1073.46H1628.75V1320.3ZM1628.75 1320.3V950.04H1630.5V1320.3ZM1630.5 1320.3V1152H1633V1320.3ZM1633 1320.3V1264.2H1634.5V1320.3ZM1634.5 1320.3V1275.42H1637V1320.3ZM1637 1320.3V1230.54H1642.25V1320.3ZM1642.25 1320.3V1275.42H1643.5V1320.3ZM1643.5 1320.3V1297.86H1646.5V1320.3ZM1646.5 1320.3V1252.98H1647.75V1320.3ZM1647.75 1320.3V1185.66H1649.75V1320.3ZM1649.75 1320.3V1196.88H1652V1320.3ZM1652 1320.3V1152H1654.25V1320.3ZM1654.25 1320.3V1174.44H1655.5V1320.3ZM1655.5 1320.3V1219.32H1656.75V1320.3ZM1656.75 1320.3V1275.42H1658V1320.3ZM1658 1320.3V1286.64H1659.25V1320.3ZM1659.25 1320.3V1297.86H1661.25V1320.3ZM1661.25 1320.3V1309.08H1662.75V1320.3ZM1662.75 1320.3V1297.86H1664.5V1320.3ZM1664.5 1320.3V1309.08H1667.75V1320.3ZM1667.75 1320.3V1297.86H1670.25V1320.3ZM1670.25 1320.3V1309.08H1675.25V1320.3ZM1675.5 1320.3V1309.08H1676.25V1320.3Z"/></clipPath></defs>
<rect x="155.5" y="815.4" width="2261" height="504.9" fill="url(#seam)" clip-path="url(#bc)"/>
<rect x="153.9" y="814.9" width="2" height="506.4" fill="#6e6b6b"/>
<rect x="153.8" y="1320.3" width="2262.7" height="1" fill="#858585"/>
<path d="M144 1320.5H154M144 1264.5H154M144 1208.5H154M144 1152.5H154M144 1095.5H154M144 1039.5H154M144 983.5H154M144 927.5H154M144 871.5H154M144 815.5H154M155.5 1321.3V1332.3M478.5 1321.3V1332.3M801.5 1321.3V1332.3M1124.5 1321.3V1332.3M1447.5 1321.3V1332.3M1770.5 1321.3V1332.3M2093.5 1321.3V1332.3" stroke="#b0b0b0" stroke-width="1" fill="none"/>
<text x="133.6" y="1327" text-anchor="end" style="font-family:'Liberation Sans', sans-serif;font-size:19.2px;letter-spacing:0.8px" fill="#464646">0</text>
<text x="133.6" y="1270.9" text-anchor="end" style="font-family:'Liberation Sans', sans-serif;font-size:19.2px;letter-spacing:0.8px" fill="#464646">5</text>
<text x="133.6" y="1214.8" text-anchor="end" style="font-family:'Liberation Sans', sans-serif;font-size:19.2px;letter-spacing:0.8px" fill="#464646">10</text>
<text x="133.6" y="1158.7" text-anchor="end" style="font-family:'Liberation Sans', sans-serif;font-size:19.2px;letter-spacing:0.8px" fill="#464646">15</text>
<text x="133.6" y="1102.6" text-anchor="end" style="font-family:'Liberation Sans', sans-serif;font-size:19.2px;letter-spacing:0.8px" fill="#464646">20</text>
<text x="133.6" y="1046.5" text-anchor="end" style="font-family:'Liberation Sans', sans-serif;font-size:19.2px;letter-spacing:0.8px" fill="#464646">25</text>
<text x="133.6" y="990.4" text-anchor="end" style="font-family:'Liberation Sans', sans-serif;font-size:19.2px;letter-spacing:0.8px" fill="#464646">30</text>
<text x="133.6" y="934.3" text-anchor="end" style="font-family:'Liberation Sans', sans-serif;font-size:19.2px;letter-spacing:0.8px" fill="#464646">35</text>
<text x="133.6" y="878.2" text-anchor="end" style="font-family:'Liberation Sans', sans-serif;font-size:19.2px;letter-spacing:0.8px" fill="#464646">40</text>
<text x="133.6" y="822.1" text-anchor="end" style="font-family:'Liberation Sans', sans-serif;font-size:19.2px;letter-spacing:0.8px" fill="#464646">45</text>
<text x="155.8" y="1356.4" text-anchor="middle" style="font-family:'Liberation Sans', sans-serif;font-size:20.5px;letter-spacing:0.95px" fill="#111">lun. 06</text>
<text x="478.8" y="1356.4" text-anchor="middle" style="font-family:'Liberation Sans', sans-serif;font-size:20.5px;letter-spacing:0.95px" fill="#111">mar. 07</text>
<text x="801.8" y="1356.4" text-anchor="middle" style="font-family:'Liberation Sans', sans-serif;font-size:20.5px;letter-spacing:0.95px" fill="#111">mer. 08</text>
<text x="1124.8" y="1356.4" text-anchor="middle" style="font-family:'Liberation Sans', sans-serif;font-size:20.5px;letter-spacing:0.95px" fill="#111">jeu. 09</text>
<text x="1447.8" y="1356.4" text-anchor="middle" style="font-family:'Liberation Sans', sans-serif;font-size:20.5px;letter-spacing:0.95px" fill="#111">ven. 10</text>
<text x="1770.8" y="1356.4" text-anchor="middle" style="font-family:'Liberation Sans', sans-serif;font-size:20.5px;letter-spacing:0.95px" fill="#111">sam. 11</text>
<text x="2093.8" y="1356.4" text-anchor="middle" style="font-family:'Liberation Sans', sans-serif;font-size:20.5px;letter-spacing:0.95px" fill="#111">dim. 12</text>
<text transform="translate(86.2 1067.6) rotate(-90)" text-anchor="middle" style="font-family:'Liberation Sans', sans-serif;font-size:21.5px" fill="#3c3c3c">kW</text>
<g id="ecowatt">
<defs><linearGradient id="tg" x1="0" y1="79" x2="0" y2="111" gradientUnits="userSpaceOnUse"><stop offset="0" stop-color="#00f2cc"/><stop offset="0.50" stop-color="#00f0ca"/><stop offset="0.62" stop-color="#00c4a2"/><stop offset="1" stop-color="#00b896"/></linearGradient></defs>
<rect x="176.5" y="49" width="481.6" height="77.6" fill="#0a0a18"/>
<g fill="none" stroke="url(#tg)" stroke-width="6.4" stroke-linecap="round" stroke-linejoin="round">
<path d="M198.4 73.4L204.8 70.9" stroke="#00f2cc"/>
<path d="M192.2 92.4H210.8A9.7 12.1 0 1 0 209.6 101.4"/>
<path d="M238.3 87.6A9.6 12.1 0 1 0 238.3 102.2"/>
<ellipse cx="257.3" cy="94.9" rx="10.3" ry="12.1"/>
</g>
<g fill="none" stroke="#fff" stroke-width="6.4" stroke-linecap="round" stroke-linejoin="round">
<path d="M275.4 85.2L283.8 107.4L291.8 84L299.6 107.4L313.8 68.4"/>
<path d="M335.4 94.9A10.3 11.2 0 1 0 335.4 97.6M335.4 85.4V107.6"/>
<path d="M346.8 76.2V101.6Q346.8 107.6 353.4 107.4M341.6 83.6H353.2"/>
<path d="M361.8 76.2V101.6Q361.8 107.6 368.6 107.4M356.6 83.6H371.2"/>
</g>
<ellipse cx="433.7" cy="89.2" rx="25.6" ry="27.8" fill="#00b4e1"/>
<text x="433.6" y="96.4" text-anchor="middle" style="font-family:'Liberation Sans', sans-serif;font-size:23.5px;letter-spacing:-1.3px" fill="#fff" stroke="#00b4e1" stroke-width="0.3">Rte</text>
<rect x="419" y="94.2" width="31.4" height="1.5" fill="#fff" opacity=".95"/>
<text x="468.2" y="78.6" style="font-family:'Liberation Sans', sans-serif;font-size:11.3px;letter-spacing:-.15px" fill="#0098c4">Le réseau</text>
<text x="468.2" y="91.6" style="font-family:'Liberation Sans', sans-serif;font-size:11.3px;letter-spacing:-.15px" fill="#0098c4">de transport</text>
<text x="468.2" y="104.6" style="font-family:'Liberation Sans', sans-serif;font-size:11.3px;letter-spacing:-.15px" fill="#0098c4">d'électricité</text>
<rect x="546.6" y="61.2" width="100.6" height="55.9" fill="#fff"/>
<rect x="553" y="68.7" width="6.3" height="6.7" fill="#2b3a8c"/><rect x="564.4" y="68.7" width="6.9" height="6.7" fill="#e1000f"/>
<text x="552.6" y="84.6" style="font-family:'Liberation Sans', sans-serif;font-size:6.7px;font-weight:bold;letter-spacing:-.1px" fill="#222">RÉPUBLIQUE</text>
<text x="552.6" y="92.6" style="font-family:'Liberation Sans', sans-serif;font-size:6.7px;font-weight:bold;letter-spacing:-.1px" fill="#222">FRANÇAISE</text>
<text x="553" y="100.2" style="font-family:'Liberation Sans', sans-serif;font-size:3.8px;font-style:italic" fill="#444">Liberté</text>
<text x="553" y="105.3" style="font-family:'Liberation Sans', sans-serif;font-size:3.8px;font-style:italic" fill="#444">Égalité</text>
<text x="553" y="110.4" style="font-family:'Liberation Sans', sans-serif;font-size:3.8px;font-style:italic" fill="#444">Fraternité</text>
<rect x="607.1" y="66.7" width="34.6" height="44.8" fill="#fff" stroke="#3a6fc0" stroke-width="0.9"/>
<text x="624.4" y="75.2" text-anchor="middle" style="font-family:'Liberation Sans', sans-serif;font-size:6.6px;font-weight:bold;letter-spacing:.9px" fill="#e1000f">ADEME</text>
<circle cx="624.2" cy="87" r="8.8" fill="#2a55b0"/>
<path d="M621 81.5q3-1.5 5 .5q-1 2 1 3.5q2 2.5-.5 4.5q-2 2-1.5 4q-2.5-.5-3-3.500q.5-2.5-1.500-4q-1-2.500 .5-5z" fill="#9fb6e6" opacity=".85"/>
<text x="624.4" y="101.5" text-anchor="middle" style="font-family:'Liberation Sans', sans-serif;font-size:3.3px;font-weight:bold;letter-spacing:.35px" fill="#e1000f">AGENCE DE LA</text>
<text x="624.4" y="105.5" text-anchor="middle" style="font-family:'Liberation Sans', sans-serif;font-size:3.3px;font-weight:bold;letter-spacing:.35px" fill="#e1000f">TRANSITION</text>
<text x="624.4" y="109.5" text-anchor="middle" style="font-family:'Liberation Sans', sans-serif;font-size:3.3px;font-weight:bold;letter-spacing:.35px" fill="#e1000f">ÉCOLOGIQUE</text>
</g>
<g id="jt">
<defs><linearGradient id="wg" x1="0" y1="0" x2="0" y2="1"><stop offset="0" stop-color="#00ceb0"/><stop offset="0.55" stop-color="#00c2a4"/><stop offset="1" stop-color="#00ae92"/></linearGradient></defs>
<path d="M169.3 135.5H660.7V258.5H169.3ZM173.0 139.2V189.1H288.9V139.2Z M294.1 139.2V189.1H411.6V139.2Z M416.9 139.2V189.1H533.4V139.2Z M538.6 139.2V189.1H655.6V139.2ZM173.0 194.3V253.3H288.9V194.3Z M294.1 194.3V253.3H411.6V194.3Z M416.9 194.3V253.3H533.4V194.3Z M538.6 194.3V253.3H655.6V194.3Z" fill="rgba(214,214,214,.92)" fill-rule="evenodd"/>
<rect x="173.0" y="139.2" width="115.9" height="49.9" fill="#f2f2f2"/>
<rect x="294.1" y="139.2" width="117.5" height="49.9" fill="#f2f2f2"/>
<rect x="416.9" y="139.2" width="116.5" height="49.9" fill="#f2f2f2"/>
<rect x="538.6" y="139.2" width="117.0" height="49.9" fill="#f2f2f2"/>
<svg x="180" y="195.1" width="106.1" height="55" viewBox="0 0 106 55.5" preserveAspectRatio="none"><rect width="106" height="55.5" fill="url(#wg)"/><path d="M14.500,0Q28,12.500 44,19.300T73,25.600Q92,25.800 106,16.200V0Z" fill="#00f0cc"/><path d="M29.500,0Q48,9.800 68,11.300Q88,11.800 106,3.400V0Z" fill="#00a289"/></svg>
<svg x="302" y="196" width="106" height="55.7" viewBox="0 0 106 55.5" preserveAspectRatio="none"><rect width="106" height="55.5" fill="url(#wg)"/><path d="M14.500,0Q28,12.500 44,19.300T73,25.600Q92,25.800 106,16.200V0Z" fill="#00f0cc"/><path d="M29.500,0Q48,9.800 68,11.300Q88,11.800 106,3.400V0Z" fill="#00a289"/></svg>
<svg x="424.2" y="196" width="106.1" height="55.7" viewBox="0 0 106 55.5" preserveAspectRatio="none"><rect width="106" height="55.5" fill="url(#wg)"/><path d="M14.500,0Q28,12.500 44,19.300T73,25.600Q92,25.800 106,16.200V0Z" fill="#00f0cc"/><path d="M29.500,0Q48,9.800 68,11.300Q88,11.800 106,3.400V0Z" fill="#00a289"/></svg>
<svg x="544" y="196" width="105.9" height="55.7" viewBox="0 0 106 55.5" preserveAspectRatio="none"><rect width="106" height="55.5" fill="url(#wg)"/><path d="M14.500,0Q28,12.500 44,19.300T73,25.600Q92,25.800 106,16.200V0Z" fill="#00f0cc"/><path d="M29.500,0Q48,9.800 68,11.300Q88,11.800 106,3.400V0Z" fill="#00a289"/></svg>
<text x="231" y="175.2" text-anchor="middle" style="font-family:'Liberation Sans', sans-serif;font-size:33.5px" fill="#000">J</text>
<text x="321" y="175.2" text-anchor="middle" style="font-family:'Liberation Sans', sans-serif;font-size:33.5px" fill="#000">J</text><text x="353.9" y="173.6" text-anchor="middle" style="font-family:'Liberation Sans', sans-serif;font-size:27px" fill="#000">+</text><text x="385.4" y="175.2" text-anchor="middle" style="font-family:'Liberation Sans', sans-serif;font-size:33.5px;" fill="#000"></text>
<path d="M381.2 158.5L388 152.3V175.2" fill="none" stroke="#000" stroke-width="2.8" stroke-linejoin="miter"/>
<text x="442.6" y="175.2" text-anchor="middle" style="font-family:'Liberation Sans', sans-serif;font-size:33.5px" fill="#000">J</text><text x="475.7" y="173.6" text-anchor="middle" style="font-family:'Liberation Sans', sans-serif;font-size:27px" fill="#000">+</text><text x="508.6" y="175.2" text-anchor="middle" style="font-family:'Liberation Sans', sans-serif;font-size:33.5px;font-weight:bold;" fill="#000">2</text>
<text x="564.2" y="175.2" text-anchor="middle" style="font-family:'Liberation Sans', sans-serif;font-size:33.5px" fill="#000">J</text><text x="597.5" y="173.6" text-anchor="middle" style="font-family:'Liberation Sans', sans-serif;font-size:27px" fill="#000">+</text><text x="630.2" y="175.2" text-anchor="middle" style="font-family:'Liberation Sans', sans-serif;font-size:33.5px;font-weight:bold;" fill="#000">3</text>
</g>
<g id="g2e">
<rect x="2322.3" y="1322.4" width="115.5" height="53" fill="#fff"/>
<rect x="2405" y="1370" width="32.800" height="10.600" fill="#fff"/>
<g fill="none" stroke="#0b70b7" stroke-width="5.2" stroke-linecap="round" stroke-linejoin="round">
<path d="M2360.2 1342.4A12.400 12.400 0 1 0 2361.900 1350.600H2350.200"/>
</g>
<g fill="none" stroke="#0b70b7" stroke-width="5" stroke-linecap="round" stroke-linejoin="miter">
<path d="M2370.4 1349.200A6.800 6.800 0 1 1 2381.400 1352.400L2372.600 1360.600"/>
</g>
<path d="M2368 1363L2374.800 1356.800 2385.700 1358.400V1363Z" fill="#0b70b7"/>
<path d="M2392 1324.800L2383.800 1338.400 2391 1340.800 2389.400 1363 2400.200 1338.800 2392.400 1335.700Z" fill="#e85a26"/>
<path d="M2403.800 1339.100H2424.400L2419.300 1344.600H2400.800Z" fill="#f29120"/>
<path d="M2399.600 1348.300H2418.500L2413.900 1353.800H2396.600Z" fill="#f29120"/>
<path d="M2395.400 1357.600H2416.800L2411.800 1363H2392.400Z" fill="#f29120"/>
<text x="2393.600" y="1334.600" style="font-family:'Liberation Sans', sans-serif;font-size:7.400px;font-weight:bold;letter-spacing:-.1px" fill="#e85a26">FRANCE</text>
<text x="2339.500" y="1368" textLength="74.500" lengthAdjust="spacingAndGlyphs" style="font-family:'Liberation Sans', sans-serif;font-size:3.300px" fill="#3d8fce">Optimisation des ressources énergétiques</text>
</g>
</svg>
<div id="title">LHB-site-L06O</div>
<div class="sb" style="left:1990.7px;top:106.7px;width:414.8px;height:60.6px;line-height:57.8px;font-size:28px"><span>Consommation: 57 kWh</span></div>
<div class="sb" style="left:1990.7px;top:176.8px;width:414.8px;height:60.6px;line-height:57.8px;font-size:28px"><span>P Max :  4 kW</span></div>
<div class="sb" style="left:1990.7px;top:247px;width:414.8px;height:60.6px;line-height:57.8px;font-size:28px"><span>P min : 0 kW</span></div>
<div id="date">dimanche 12 avril 2026</div>
<div class="sb" style="left:560.6px;top:804.3px;width:415.2px;height:61.4px;line-height:58.6px;font-size:28px"><span>Consommation: 526 kWh</span></div>
<div class="sb" style="left:1098.6px;top:804.3px;width:414.8px;height:61.4px;line-height:58.6px;font-size:28px"><span>P Max :  43 kW</span></div>
<div class="sb" style="left:1608.8px;top:804.3px;width:415px;height:61.4px;line-height:58.6px;font-size:28px"><span>P min : 0 kW</span></div>
</body></html>
